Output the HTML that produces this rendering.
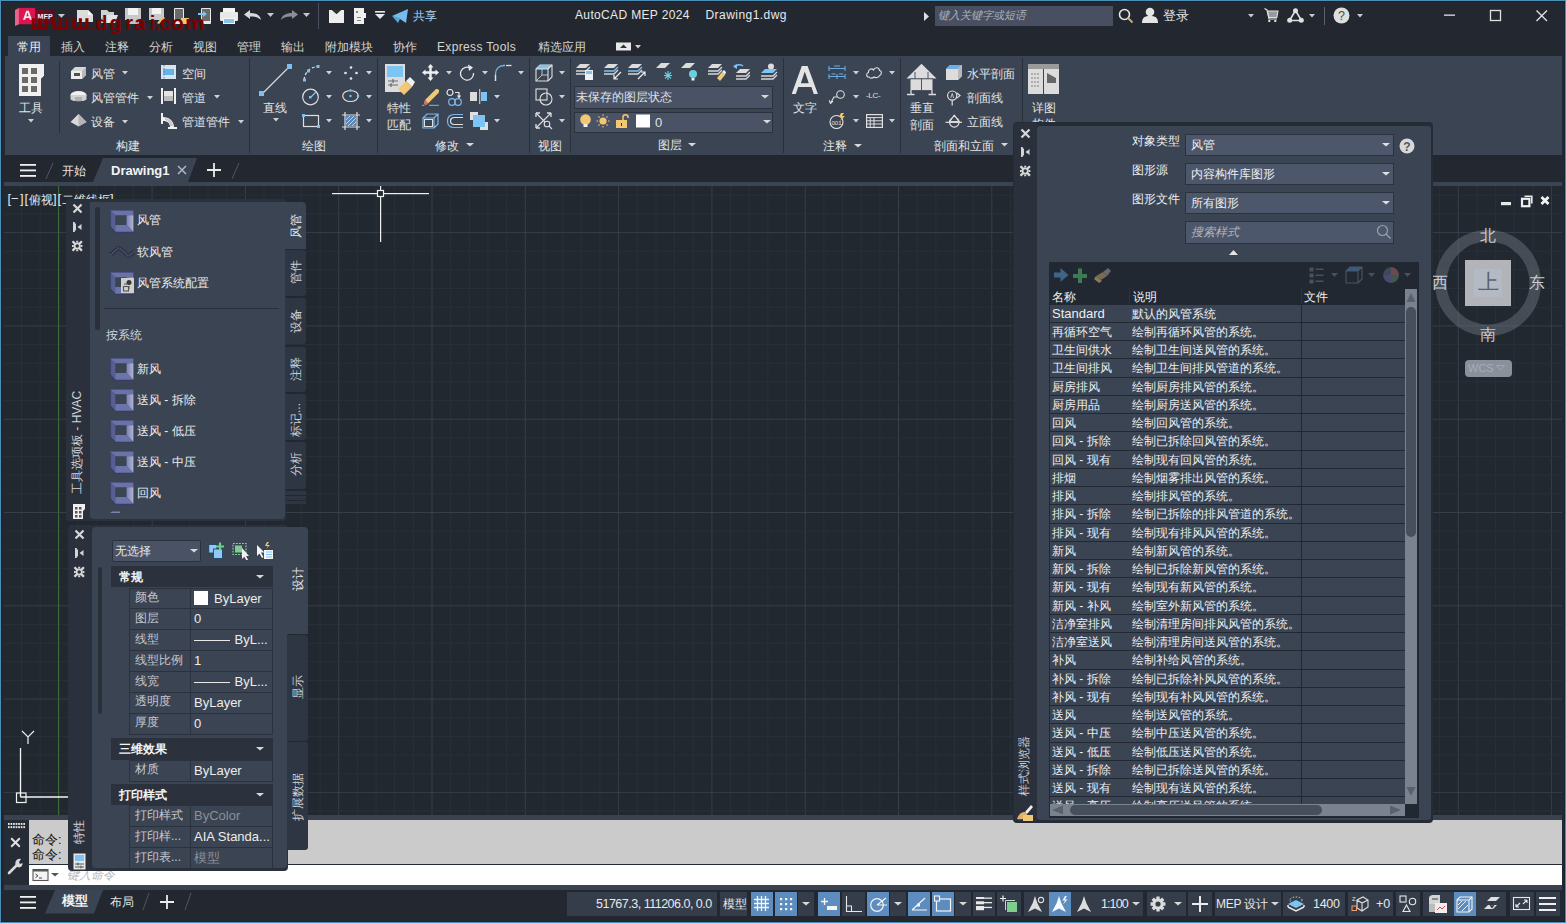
<!DOCTYPE html><html><head><meta charset="utf-8"><style>
html,body{margin:0;padding:0;}
body{width:1566px;height:923px;position:relative;overflow:hidden;background:#232830;font-family:"Liberation Sans",sans-serif;}
.a{position:absolute;}
.t{white-space:nowrap;line-height:1;}
</style></head><body><div class="a" style="left:0px;top:0px;width:1566px;height:923px;background:#4a90b8;"></div>
<div class="a" style="left:1px;top:1px;width:1564px;height:921px;background:#0f2538;"></div>
<div class="a" style="left:2px;top:2px;width:1562px;height:919px;background:#232830;"></div>
<svg class="a" style="left:13px;top:6px;" width="54" height="22" viewBox="0 0 54 22">
<defs><linearGradient id="mepg" x1="0" y1="0" x2="1" y2="0"><stop offset="0" stop-color="#7a0a2a"/><stop offset="1" stop-color="#4a1424"/></linearGradient></defs>
<path d="M2 4 L6 2 V18.2 L2 20 Z" fill="#e8648a"/>
<rect x="5.9" y="1.9" width="16.1" height="16.3" fill="#dc1450"/>
<path d="M10 13.8 L13.2 4.8 H15.8 L19 13.8 H16.8 L16.2 11.9 H12.8 L12.2 13.8 Z M13.3 10.2 H15.7 L14.5 6.6 Z" fill="#fbe4ee"/>
<rect x="22" y="4" width="19.4" height="13.3" fill="url(#mepg)"/>
<text x="24.6" y="12.9" font-family="Liberation Sans" font-weight="bold" font-size="7" fill="#f8eef2">MEP</text>
<path d="M44.8 7.9 H52 L48.4 11.7 Z" fill="#c8c8c8"/>
</svg>
<svg class="a" style="left:76px;top:7px;" width="18" height="17" viewBox="0 0 18 17"><path d="M1 3 H12 L17 8 V15 H1 Z" fill="#dcdcdc"/><path d="M12 3 L17 8 H12 Z" fill="#f8f8f8"/></svg>
<svg class="a" style="left:100px;top:8px;" width="19" height="16" viewBox="0 0 19 16"><path d="M1 2 H7 L9 4 H14 V7 H4 L1 14 Z" fill="#d0d0d0"/><path d="M4 7 H18 L15 15 H1 Z" fill="#e4e4e4"/></svg>
<svg class="a" style="left:124px;top:7px;" width="18" height="18" viewBox="0 0 18 18"><rect x="1" y="1" width="16" height="12" fill="#c8c8c8"/><rect x="4" y="1" width="10" height="7" fill="#f2f2f2"/><rect x="3" y="13" width="12" height="4" fill="#e8e8e8" opacity="0.8"/></svg>
<svg class="a" style="left:148px;top:7px;" width="18" height="18" viewBox="0 0 18 18"><rect x="1" y="1" width="15" height="12" fill="#c8c8c8"/><rect x="4" y="1" width="9" height="6" fill="#f2f2f2"/><path d="M9 16 L15 9 L17 11 L11 17 Z" fill="#f0c070"/></svg>
<svg class="a" style="left:172px;top:7px;" width="20" height="18" viewBox="0 0 20 18"><rect x="2" y="1" width="10" height="16" rx="1" fill="#e8e8e8"/><rect x="3" y="2" width="8" height="12" fill="#6a6a6a"/><rect x="9" y="11" width="8" height="6" fill="#f0c878"/></svg>
<svg class="a" style="left:197px;top:7px;" width="16" height="18" viewBox="0 0 16 18"><rect x="4" y="1" width="10" height="16" rx="1" fill="#e8e8e8"/><rect x="5" y="2" width="8" height="12" fill="#6a6a6a"/><path d="M1 6 H6 V4 L10 7 L6 10 V8 H1 Z" fill="#7cc4f4"/></svg>
<svg class="a" style="left:220px;top:7px;" width="18" height="18" viewBox="0 0 18 18"><rect x="3" y="1" width="12" height="5" fill="#f4f4f4"/><rect x="0" y="5" width="18" height="9" rx="1" fill="#e8e8e8"/><rect x="3" y="11" width="12" height="6" fill="#f4f4f4"/><rect x="4" y="12" width="10" height="4" fill="#8cc4ec"/></svg>
<svg class="a" style="left:244px;top:10px;" width="19" height="11" viewBox="0 0 19 11"><path d="M0 4.5 L6 0 V3 C12 3 16 5 17 10 C14 7 11 6.5 6 6.5 V9 Z" fill="#d8d8d8"/></svg>
<svg class="a" style="left:267px;top:13px;" width="7" height="5" viewBox="0 0 7 5"><path d="M0 0 H7 L3.5 4 Z" fill="#c8c8c8"/></svg>
<svg class="a" style="left:280px;top:10px;" width="19" height="11" viewBox="0 0 19 11"><path d="M18 4.5 L12 0 V3 C6 3 2 5 1 10 C4 7 7 6.5 12 6.5 V9 Z" fill="#8a8e94"/></svg>
<svg class="a" style="left:303px;top:13px;" width="7" height="5" viewBox="0 0 7 5"><path d="M0 0 H7 L3.5 4 Z" fill="#c8c8c8"/></svg>
<div class="a" style="left:318px;top:3px;width:1px;height:26px;background:#4a5060;"></div>
<svg class="a" style="left:329px;top:9px;" width="15" height="14" viewBox="0 0 15 14"><path d="M0 1 H3 L7.5 5 L12 1 H15 V14 H0 Z" fill="#eeeeee"/><path d="M3 1 L7.5 5 L12 1 Z" fill="#333"/></svg>
<svg class="a" style="left:354px;top:8px;" width="12" height="16" viewBox="0 0 12 16"><rect x="0" y="0" width="10" height="16" fill="#f0f0f0"/><rect x="9" y="5" width="3" height="5" fill="#f0f0f0"/><rect x="2" y="3" width="2" height="2" fill="#888"/><rect x="3" y="9" width="4" height="1" fill="#888"/><rect x="3" y="12" width="4" height="1" fill="#888"/></svg>
<svg class="a" style="left:375px;top:11px;" width="10" height="9" viewBox="0 0 10 9"><rect x="0" y="0" width="10" height="1.6" fill="#e8e8e8"/><path d="M0 3 H10 L5 8 Z" fill="#e8e8e8"/></svg>
<svg class="a" style="left:392px;top:9px;" width="17" height="14" viewBox="0 0 17 14"><path d="M0 7 L16 0 L14 14 L8 10 Z" fill="#74bcec"/><path d="M0 7 L8 10 L6 14 Z" fill="#5aa8dc"/></svg>
<div class="a t " style="left:413px;top:10px;font-size:12px;color:#a8d4f4;">共享</div>
<svg class="a" style="left:0px;top:0px;" width="220" height="40" viewBox="0 0 220 40"><path d="M33.3 18.2 V26.3 Q33.3 28.4 35.4 28.4 H44.2 Q46.3 28.4 46.3 26.3 V18.2 M39.8 18.2 V28.4" fill="none" stroke="#7d0000" stroke-width="3.1" stroke-linejoin="round"/><path d="M53.7 18.2 V26.3 Q53.7 28.4 55.8 28.4 H64.6 Q66.7 28.4 66.7 26.3 V18.2 M60.2 18.2 V28.4" fill="none" stroke="#7d0000" stroke-width="3.1" stroke-linejoin="round"/><path d="M73.9 18.2 V26.3 Q73.9 28.4 76.0 28.4 H84.8 Q86.9 28.4 86.9 26.3 V18.2 M80.4 18.2 V28.4" fill="none" stroke="#7d0000" stroke-width="3.1" stroke-linejoin="round"/><rect x="91.2" y="26.8" width="3.2" height="3.1" fill="#7d0000"/><text x="95.3" y="29.8" font-family="Liberation Sans" font-weight="bold" font-size="20" fill="#7d0000">d</text><text x="109.5" y="29.8" font-family="Liberation Sans" font-weight="bold" font-size="20" fill="#7d0000">g</text><text x="125.3" y="29.8" font-family="Liberation Sans" font-weight="bold" font-size="20" fill="#7d0000">r</text><text x="134.5" y="29.8" font-family="Liberation Sans" font-weight="bold" font-size="20" fill="#7d0000">a</text><text x="149.8" y="29.8" font-family="Liberation Sans" font-weight="bold" font-size="20" fill="#7d0000">i</text><text x="154.8" y="29.8" font-family="Liberation Sans" font-weight="bold" font-size="20" fill="#7d0000">.</text><text x="159.8" y="29.8" font-family="Liberation Sans" font-weight="bold" font-size="20" fill="#7d0000">c</text><text x="171.6" y="29.8" font-family="Liberation Sans" font-weight="bold" font-size="20" fill="#7d0000">o</text><text x="185.0" y="29.8" font-family="Liberation Sans" font-weight="bold" font-size="20" fill="#7d0000" transform="translate(185 0) scale(1.12 1) translate(-185 0)">m</text></svg>
<div class="a t " style="left:575px;top:9.3px;font-size:12px;color:#e8e8e8;letter-spacing:0.35px;">AutoCAD MEP 2024</div>
<div class="a t " style="left:705.5px;top:9.3px;font-size:12px;color:#e8e8e8;letter-spacing:0.45px;">Drawing1.dwg</div>
<svg class="a" style="left:924px;top:12px;" width="6" height="9" viewBox="0 0 6 9"><path d="M0 0 L5 4.5 L0 9 Z" fill="#e0e0e0"/></svg>
<div class="a" style="left:935px;top:6px;width:178px;height:20px;background:#484f60;"></div>
<div class="a t " style="left:938px;top:10px;font-size:11px;color:#aeb2ba;font-style:italic;"><i>键入关键字或短语</i></div>
<svg class="a" style="left:1118px;top:8px;" width="16" height="16" viewBox="0 0 16 16"><circle cx="6.5" cy="6.5" r="5" fill="none" stroke="#e8e8e8" stroke-width="1.6"/><path d="M10 10 L14.5 14.5" stroke="#d0a878" stroke-width="2"/></svg>
<svg class="a" style="left:1141px;top:7px;" width="18" height="16" viewBox="0 0 18 16"><circle cx="9" cy="5" r="4.3" fill="#e4e4e4"/><path d="M1 16 C1 10 4 9 9 9 C14 9 17 10 17 16 Z" fill="#e4e4e4"/></svg>
<div class="a t " style="left:1163px;top:9px;font-size:13px;color:#e8e8e8;">登录</div>
<svg class="a" style="left:1248px;top:14px;" width="6" height="4" viewBox="0 0 6 4"><path d="M0 0 H6 L3 3.5 Z" fill="#c8c8c8"/></svg>
<svg class="a" style="left:1264px;top:8px;" width="16" height="14" viewBox="0 0 16 14"><path d="M0.5 0.5 L3 2 L5 11 H13" fill="none" stroke="#e0e0e0" stroke-width="1.2"/><path d="M3.6 3 H14 L12.8 9.5 H4.8 Z" fill="#9a9a9a" stroke="#e0e0e0" stroke-width="1.1"/><rect x="4.3" y="12" width="2" height="2" fill="#e0e0e0"/><rect x="10.3" y="12" width="2" height="2" fill="#e0e0e0"/></svg>
<svg class="a" style="left:1287px;top:8px;" width="17" height="15" viewBox="0 0 17 15"><path d="M8.5 2.5 L2.5 12.5 M8.5 2.5 L14.5 12.5 M2.5 12.5 H14.5" fill="none" stroke="#e0e0e0" stroke-width="1.6"/><circle cx="8.5" cy="2.8" r="2.5" fill="#e0e0e0"/><circle cx="2.7" cy="12.3" r="2.5" fill="#e0e0e0"/><circle cx="14.3" cy="12.3" r="2.5" fill="#e0e0e0"/></svg>
<svg class="a" style="left:1309px;top:14px;" width="6" height="4" viewBox="0 0 6 4"><path d="M0 0 H6 L3 3.5 Z" fill="#c8c8c8"/></svg>
<div class="a" style="left:1324px;top:7px;width:1px;height:18px;background:#5a6070;"></div>
<svg class="a" style="left:1333px;top:7px;" width="17" height="17" viewBox="0 0 17 17"><circle cx="8.5" cy="8.5" r="8" fill="#dedede"/><text x="8.5" y="13" text-anchor="middle" font-family="Liberation Sans" font-size="12.5" fill="#4a4a4a">?</text></svg>
<svg class="a" style="left:1357px;top:14px;" width="6" height="4" viewBox="0 0 6 4"><path d="M0 0 H6 L3 3.5 Z" fill="#c8c8c8"/></svg>
<svg class="a" style="left:1444px;top:14px;" width="12" height="3" viewBox="0 0 12 3"><rect x="0" y="0.5" width="11" height="1.3" fill="#e0e0e0"/></svg>
<svg class="a" style="left:1489px;top:9px;" width="14" height="14" viewBox="0 0 14 14"><rect x="1.5" y="1.5" width="10" height="10" fill="none" stroke="#e0e0e0" stroke-width="1.3"/></svg>
<svg class="a" style="left:1535px;top:9px;" width="14" height="14" viewBox="0 0 14 14"><path d="M1.5 1.5 L12 12 M12 1.5 L1.5 12" stroke="#e0e0e0" stroke-width="1.4"/></svg>
<div class="a" style="left:8px;top:36px;width:42px;height:20px;background:#3b4453;"></div>
<div class="a t " style="left:17px;top:40.98px;font-size:12px;color:#f0f0f0;">常用</div>
<div class="a t " style="left:61px;top:40.98px;font-size:12px;color:#d4d4d4;">插入</div>
<div class="a t " style="left:105px;top:40.98px;font-size:12px;color:#d4d4d4;">注释</div>
<div class="a t " style="left:149px;top:40.98px;font-size:12px;color:#d4d4d4;">分析</div>
<div class="a t " style="left:193px;top:40.98px;font-size:12px;color:#d4d4d4;">视图</div>
<div class="a t " style="left:237px;top:40.98px;font-size:12px;color:#d4d4d4;">管理</div>
<div class="a t " style="left:281px;top:40.98px;font-size:12px;color:#d4d4d4;">输出</div>
<div class="a t " style="left:325px;top:40.98px;font-size:12px;color:#d4d4d4;">附加模块</div>
<div class="a t " style="left:393px;top:40.98px;font-size:12px;color:#d4d4d4;">协作</div>
<div class="a t " style="left:437px;top:41px;font-size:12px;color:#d4d4d4;letter-spacing:0.35px;">Express Tools</div>
<div class="a t " style="left:538px;top:40.98px;font-size:12px;color:#d4d4d4;">精选应用</div>
<svg class="a" style="left:616px;top:42px;" width="26" height="9" viewBox="0 0 26 9"><rect x="0" y="0.5" width="15" height="8" fill="#e8e8e8"/><path d="M4 6 L7.5 2.5 L11 6 Z" fill="#333"/><path d="M19 3 H25 L22 6.5 Z" fill="#d0d0d0"/></svg>
<div class="a" style="left:5px;top:56px;width:1557px;height:99px;background:#3b4453;"></div>
<div class="a" style="left:249px;top:58px;width:1px;height:95px;background:#2a303b;"></div>
<div class="a" style="left:377px;top:58px;width:1px;height:95px;background:#2a303b;"></div>
<div class="a" style="left:529px;top:58px;width:1px;height:95px;background:#2a303b;"></div>
<div class="a" style="left:570px;top:58px;width:1px;height:95px;background:#2a303b;"></div>
<div class="a" style="left:783px;top:58px;width:1px;height:95px;background:#2a303b;"></div>
<div class="a" style="left:900px;top:58px;width:1px;height:95px;background:#2a303b;"></div>
<div class="a" style="left:1022px;top:58px;width:1px;height:95px;background:#2a303b;"></div>
<div class="a" style="left:59px;top:61px;width:1px;height:72px;background:#2a303b;"></div>
<svg class="a" style="left:18px;top:63px;" width="27" height="34" viewBox="0 0 27 34"><path d="M1 1 H26 V13 L23 16 V33 H1 Z" fill="#f0f0f0"/><path d="M23 16 L26 13 V20 L23 23 Z" fill="#3b4453"/><rect x="4" y="5" width="6" height="6" fill="#6a6a6a"/><rect x="13" y="5" width="6" height="6" fill="#6a6a6a"/><rect x="4" y="14" width="6" height="6" fill="#6a6a6a"/><rect x="13" y="14" width="6" height="6" fill="#6a6a6a"/><rect x="4" y="23" width="6" height="6" fill="#6a6a6a"/><rect x="13" y="23" width="6" height="6" fill="#6a6a6a"/></svg>
<div class="a t " style="left:19px;top:101.98px;font-size:12px;color:#e4e4e4;">工具</div>
<svg class="a" style="left:28px;top:118.5px;" width="6" height="4" viewBox="0 0 6 4"><path d="M0 0 H6 L3.0 3.6 Z" fill="#d0d0d0"/></svg>
<svg class="a" style="left:70px;top:66px;" width="17" height="14" viewBox="0 0 17 14"><path d="M1 5 L5 1 H16 V9 L12 13 H1 Z" fill="#d8d8d8"/><path d="M1 5 H12 V13 H1 Z" fill="#ececec"/><path d="M12 5 L16 1 V9 L12 13 Z" fill="#b8b8b8"/><rect x="4" y="7" width="6" height="3" fill="#505050"/></svg>
<div class="a t " style="left:91px;top:67.88px;font-size:12px;color:#e4e4e4;">风管</div>
<svg class="a" style="left:122px;top:71.4px;" width="6" height="4" viewBox="0 0 6 4"><path d="M0 0 H6 L3.0 3.6 Z" fill="#d0d0d0"/></svg>
<svg class="a" style="left:70px;top:90px;" width="17" height="14" viewBox="0 0 17 14"><ellipse cx="8.5" cy="5" rx="8" ry="4" fill="#f0f0f0"/><path d="M0.5 5 V9 C0.5 12 16.5 12 16.5 9 V5 Z" fill="#d0d0d0"/><rect x="5" y="7" width="7" height="4" fill="#b0b0b0"/></svg>
<div class="a t " style="left:91px;top:92.28px;font-size:12px;color:#e4e4e4;">风管管件</div>
<svg class="a" style="left:147px;top:95.8px;" width="6" height="4" viewBox="0 0 6 4"><path d="M0 0 H6 L3.0 3.6 Z" fill="#d0d0d0"/></svg>
<svg class="a" style="left:70px;top:114px;" width="17" height="13" viewBox="0 0 17 13"><path d="M8.5 0 L16.5 8 L8.5 12.5 L0.5 8 Z" fill="#d8d8d8"/><path d="M8.5 0 L16.5 8 L8.5 12.5 Z" fill="#b4b4b4"/></svg>
<div class="a t " style="left:91px;top:116.28px;font-size:12px;color:#e4e4e4;">设备</div>
<svg class="a" style="left:122px;top:119.8px;" width="6" height="4" viewBox="0 0 6 4"><path d="M0 0 H6 L3.0 3.6 Z" fill="#d0d0d0"/></svg>
<svg class="a" style="left:161px;top:65px;" width="15" height="15" viewBox="0 0 15 15"><rect x="0" y="0" width="15" height="14" fill="#d8e4f0"/><rect x="2" y="4" width="11" height="6" fill="#64b4ec"/><path d="M3 0 V14" stroke="#4a8cc8" stroke-dasharray="1.5 1.5"/></svg>
<div class="a t " style="left:182px;top:67.68px;font-size:12px;color:#e4e4e4;">空间</div>
<svg class="a" style="left:161px;top:88px;" width="16" height="17" viewBox="0 0 16 17"><rect x="0" y="0" width="2" height="16" fill="#f0f0f0"/><rect x="13" y="0" width="2" height="16" fill="#f0f0f0"/><rect x="3" y="3" width="9" height="10" fill="#e4e4e4"/><rect x="3" y="8" width="9" height="5" fill="#bcbcbc"/></svg>
<div class="a t " style="left:182px;top:91.88px;font-size:12px;color:#e4e4e4;">管道</div>
<svg class="a" style="left:214px;top:95.4px;" width="6" height="4" viewBox="0 0 6 4"><path d="M0 0 H6 L3.0 3.6 Z" fill="#d0d0d0"/></svg>
<svg class="a" style="left:160px;top:112px;" width="18" height="18" viewBox="0 0 18 18"><path d="M1 1 H3 V5 C9 5 14 9 14 15 H17 V17 H8 V15 H10 C10 11 7 9 3 9 V12 H1 Z" fill="#f0f0f0"/><path d="M5 6 C9 6 13 10 13 14 H10 C10 11 8 8 5 8 Z" fill="#c8c8c8"/></svg>
<div class="a t " style="left:182px;top:115.98px;font-size:12px;color:#e4e4e4;">管道管件</div>
<svg class="a" style="left:238px;top:119.5px;" width="6" height="4" viewBox="0 0 6 4"><path d="M0 0 H6 L3.0 3.6 Z" fill="#d0d0d0"/></svg>
<div class="a t " style="left:116px;top:139.98px;font-size:12px;color:#e4e4e4;">构建</div>
<svg class="a" style="left:258px;top:63px;" width="34" height="34" viewBox="0 0 34 34"><path d="M4 31 L31 4" stroke="#e0e0e0" stroke-width="1.1"/><rect x="1" y="28" width="5" height="5" fill="#7cc0f0"/><rect x="29" y="1" width="5" height="5" fill="#7cc0f0"/></svg>
<div class="a t " style="left:263px;top:102.18px;font-size:12px;color:#e4e4e4;">直线</div>
<svg class="a" style="left:273px;top:118.4px;" width="6" height="4" viewBox="0 0 6 4"><path d="M0 0 H6 L3.0 3.6 Z" fill="#d0d0d0"/></svg>
<svg class="a" style="left:302px;top:65px;" width="18" height="17" viewBox="0 0 18 17"><path d="M2 15 C3 7 8 2 16 1.5" fill="none" stroke="#e0e0e0" stroke-width="1.2" stroke-dasharray="3 2"/><rect x="1" y="13.5" width="3" height="3" fill="#7cc0f0"/><rect x="5" y="4.5" width="3" height="3" fill="#7cc0f0"/><rect x="14.5" y="0" width="3" height="3" fill="#7cc0f0"/></svg>
<svg class="a" style="left:326px;top:71px;" width="6" height="4" viewBox="0 0 6 4"><path d="M0 0 H6 L3.0 3.6 Z" fill="#d0d0d0"/></svg>
<svg class="a" style="left:344px;top:66px;" width="14" height="14" viewBox="0 0 14 14"><circle cx="7" cy="1.5" r="1.3" fill="#e8e8e8"/><circle cx="1.5" cy="7" r="1.3" fill="#e8e8e8"/><circle cx="12.5" cy="7" r="1.3" fill="#e8e8e8"/><circle cx="7" cy="12.5" r="1.3" fill="#e8e8e8"/></svg>
<svg class="a" style="left:366px;top:71px;" width="6" height="4" viewBox="0 0 6 4"><path d="M0 0 H6 L3.0 3.6 Z" fill="#d0d0d0"/></svg>
<svg class="a" style="left:302px;top:88px;" width="18" height="18" viewBox="0 0 18 18"><circle cx="8.5" cy="9" r="7.8" fill="none" stroke="#e0e0e0" stroke-width="1.2"/><path d="M9 9 L14 4" stroke="#7cc0f0" stroke-width="1.2"/><rect x="7" y="8" width="2.5" height="2.5" fill="#7cc0f0"/></svg>
<svg class="a" style="left:326px;top:95px;" width="6" height="4" viewBox="0 0 6 4"><path d="M0 0 H6 L3.0 3.6 Z" fill="#d0d0d0"/></svg>
<svg class="a" style="left:342px;top:89px;" width="18" height="14" viewBox="0 0 18 14"><ellipse cx="8.5" cy="7" rx="7.8" ry="5.5" fill="none" stroke="#e0e0e0" stroke-width="1.2"/><circle cx="8.5" cy="1.5" r="1.3" fill="#7cc0f0"/><circle cx="8.5" cy="7" r="1.2" fill="#7cc0f0"/><circle cx="16" cy="7" r="1.3" fill="#7cc0f0"/></svg>
<svg class="a" style="left:366px;top:95px;" width="6" height="4" viewBox="0 0 6 4"><path d="M0 0 H6 L3.0 3.6 Z" fill="#d0d0d0"/></svg>
<svg class="a" style="left:302px;top:114px;" width="18" height="14" viewBox="0 0 18 14"><rect x="1.5" y="1.5" width="15" height="11" fill="none" stroke="#e0e0e0" stroke-width="1.2"/><rect x="0" y="0" width="3" height="3" fill="#7cc0f0"/><rect x="15" y="11" width="3" height="3" fill="#7cc0f0"/></svg>
<svg class="a" style="left:326px;top:119px;" width="6" height="4" viewBox="0 0 6 4"><path d="M0 0 H6 L3.0 3.6 Z" fill="#d0d0d0"/></svg>
<svg class="a" style="left:342px;top:112px;" width="18" height="18" viewBox="0 0 18 18"><path d="M3 0 V18 M15 0 V18 M0 3 H18 M0 15 H18" stroke="#e0e0e0" stroke-width="1.2"/><rect x="4" y="4" width="10" height="10" fill="#5a86b8"/><path d="M4 12 L12 4 M6 14 L14 6 M4 8 L8 4 M10 14 L14 10" stroke="#b8d4f0" stroke-width="1"/></svg>
<svg class="a" style="left:366px;top:119px;" width="6" height="4" viewBox="0 0 6 4"><path d="M0 0 H6 L3.0 3.6 Z" fill="#d0d0d0"/></svg>
<div class="a t " style="left:302px;top:139.58px;font-size:12px;color:#e4e4e4;">绘图</div>
<svg class="a" style="left:384px;top:63px;" width="32" height="34" viewBox="0 0 32 34"><rect x="1" y="1" width="20" height="28" fill="#dcdcdc"/><rect x="3" y="3" width="16" height="11" fill="#7cc4f4"/><path d="M4 18 H14 M9 16 V20 M4 22 H14 M7 20 V24" stroke="#6a6a6a" stroke-width="1.2"/><path d="M14 26 L22 18 L28 24 L20 32 Z" fill="#f0c878"/><path d="M22 18 L26 14 L31 19 L28 24 Z" fill="#f0f0f0"/></svg>
<div class="a t " style="left:387px;top:102.48px;font-size:12px;color:#e4e4e4;">特性</div>
<div class="a t " style="left:387px;top:119.18px;font-size:12px;color:#e4e4e4;">匹配</div>
<svg class="a" style="left:422px;top:64px;" width="17" height="17" viewBox="0 0 17 17"><path d="M8.5 0 L11.5 3.5 H9.7 V7.3 H13.5 V5.5 L17 8.5 L13.5 11.5 V9.7 H9.7 V13.5 H11.5 L8.5 17 L5.5 13.5 H7.3 V9.7 H3.5 V11.5 L0 8.5 L3.5 5.5 V7.3 H7.3 V3.5 H5.5 Z" fill="#f0f0f0"/></svg>
<svg class="a" style="left:446px;top:71px;" width="6" height="4" viewBox="0 0 6 4"><path d="M0 0 H6 L3.0 3.6 Z" fill="#d0d0d0"/></svg>
<svg class="a" style="left:459px;top:64px;" width="16" height="17" viewBox="0 0 16 17"><path d="M12 4.5 A6.5 6.5 0 1 0 14.5 9" fill="none" stroke="#e8e8e8" stroke-width="1.3"/><path d="M9 0.5 L14 3.5 L10 7 Z" fill="#e8e8e8"/></svg>
<svg class="a" style="left:482px;top:71px;" width="6" height="4" viewBox="0 0 6 4"><path d="M0 0 H6 L3.0 3.6 Z" fill="#d0d0d0"/></svg>
<svg class="a" style="left:494px;top:64px;" width="18" height="17" viewBox="0 0 18 17"><path d="M1.5 17 V10 C1.5 5 5 1.5 10 1.5 H11" fill="none" stroke="#7cb8e8" stroke-width="1.3"/><path d="M12 1.5 H17.5" stroke="#e0e0e0" stroke-width="1.3"/><path d="M1.5 11 V17" stroke="#e0e0e0" stroke-width="1.3"/></svg>
<svg class="a" style="left:518px;top:71px;" width="6" height="4" viewBox="0 0 6 4"><path d="M0 0 H6 L3.0 3.6 Z" fill="#d0d0d0"/></svg>
<svg class="a" style="left:422px;top:88px;" width="18" height="18" viewBox="0 0 18 18"><path d="M3 12 L13.5 1.5 C14.5 0.5 17.5 1 17 3.5 L16.5 5 L6 15.5 Z" fill="#f0c878"/><path d="M3 12 L6 15.5 L4.5 17 C3 17.5 1.5 16 2 14 Z" fill="#e06a70"/><path d="M0 17.3 H2.5 M7 17.3 H17" stroke="#7cb8e8" stroke-width="1"/></svg>
<svg class="a" style="left:446px;top:89px;" width="18" height="17" viewBox="0 0 18 17"><circle cx="4" cy="3.5" r="3" fill="none" stroke="#e8e8e8" stroke-width="1.2"/><path d="M9 3.5 H13 V8 M11.5 6.5 L13 8.5 L14.5 6.5" fill="none" stroke="#e8e8e8" stroke-width="1.2"/><circle cx="6" cy="13" r="3.3" fill="none" stroke="#7cb8e8" stroke-width="1.2"/><circle cx="12" cy="13" r="3.3" fill="none" stroke="#7cb8e8" stroke-width="1.2"/></svg>
<svg class="a" style="left:470px;top:89px;" width="18" height="15" viewBox="0 0 18 15"><rect x="0" y="3" width="7" height="9" fill="#dcdcdc"/><rect x="9" y="0" width="1.3" height="15" fill="#b8b8b8"/><rect x="11" y="3" width="6" height="9" fill="#7cc4f4"/></svg>
<svg class="a" style="left:494px;top:95px;" width="6" height="4" viewBox="0 0 6 4"><path d="M0 0 H6 L3.0 3.6 Z" fill="#d0d0d0"/></svg>
<svg class="a" style="left:422px;top:113px;" width="18" height="16" viewBox="0 0 18 16"><path d="M1 5 H12 V15 H1 Z M1 5 L5 1 H16 V11 L12 15 M12 5 L16 1" fill="none" stroke="#7cb8e8" stroke-width="1.2"/><rect x="2.5" y="6.5" width="8" height="7" fill="none" stroke="#e0e0e0" stroke-width="1"/></svg>
<svg class="a" style="left:446px;top:113px;" width="18" height="16" viewBox="0 0 18 16"><path d="M17 1.5 H8 C4 1.5 1.5 4 1.5 8 C1.5 12 4 14.5 8 14.5 H17" fill="none" stroke="#7cb8e8" stroke-width="1.2"/><path d="M17 4.5 H8.5 C6 4.5 4.5 6 4.5 8 C4.5 10 6 11.5 8.5 11.5 H17" fill="none" stroke="#e0e0e0" stroke-width="1.2"/></svg>
<svg class="a" style="left:470px;top:112px;" width="18" height="18" viewBox="0 0 18 18"><rect x="0" y="0" width="8" height="8" fill="#e0e0e0"/><rect x="10" y="10" width="8" height="8" fill="#e0e0e0"/><rect x="3" y="3" width="12" height="12" fill="#7cc4f4"/></svg>
<svg class="a" style="left:494px;top:119px;" width="6" height="4" viewBox="0 0 6 4"><path d="M0 0 H6 L3.0 3.6 Z" fill="#d0d0d0"/></svg>
<div class="a t " style="left:435px;top:139.58px;font-size:12px;color:#e4e4e4;">修改</div>
<svg class="a" style="left:465.5px;top:143.3px;" width="8" height="4" viewBox="0 0 8 4"><path d="M0 0 H8 L4.0 3.6 Z" fill="#d8d8d8"/></svg>
<svg class="a" style="left:535px;top:64px;" width="18" height="18" viewBox="0 0 18 18"><path d="M1 5 L5 1 H17 V13 L13 17 H1 Z" fill="none" stroke="#e0e0e0" stroke-width="1.1"/><path d="M1 5 L5 1 H17 L13 5 Z" fill="#7cc4f4"/><path d="M1 5 H13 V17 M13 5 L17 1" stroke="#e0e0e0" stroke-width="1.1" fill="none"/><path d="M1 17 L7 11 H13 M7 11 V5" stroke="#e0e0e0" stroke-width="0.8" fill="none"/></svg>
<svg class="a" style="left:559px;top:71px;" width="6" height="4" viewBox="0 0 6 4"><path d="M0 0 H6 L3.0 3.6 Z" fill="#d0d0d0"/></svg>
<svg class="a" style="left:535px;top:88px;" width="18" height="18" viewBox="0 0 18 18"><rect x="1" y="1" width="11" height="11" fill="none" stroke="#e0e0e0" stroke-width="1.1"/><circle cx="11" cy="11" r="6" fill="none" stroke="#e0e0e0" stroke-width="1.1"/></svg>
<svg class="a" style="left:559px;top:95px;" width="6" height="4" viewBox="0 0 6 4"><path d="M0 0 H6 L3.0 3.6 Z" fill="#d0d0d0"/></svg>
<svg class="a" style="left:535px;top:112px;" width="18" height="18" viewBox="0 0 18 18"><path d="M1 1 L11 11 M16 1 L1 16" stroke="#e0e0e0" stroke-width="1.1"/><path d="M1 1 H5 M1 1 V5 M16 1 H12 M16 1 V5 M1 16 H5 M1 16 V12" stroke="#e0e0e0" stroke-width="1.3"/><circle cx="12" cy="12" r="2.8" fill="#3b4453" stroke="#e0e0e0" stroke-width="1.1"/><path d="M14 14 L17 17" stroke="#e0e0e0" stroke-width="1.1"/></svg>
<svg class="a" style="left:559px;top:119px;" width="6" height="4" viewBox="0 0 6 4"><path d="M0 0 H6 L3.0 3.6 Z" fill="#d0d0d0"/></svg>
<div class="a t " style="left:538px;top:139.58px;font-size:12px;color:#e4e4e4;">视图</div>
<svg class="a" style="left:576px;top:63px;" width="18" height="18" viewBox="0 0 18 18"><path d="M0 5 L4 1 H14 L10 5 Z" fill="#dcdcdc"/><path d="M0 8 H10 L14 4" fill="none" stroke="#d8d8d8" stroke-width="1.3"/><path d="M0 11 H10 L14 7" fill="none" stroke="#d8d8d8" stroke-width="1.3"/><rect x="9" y="7" width="8" height="10" fill="#f0f0f0"/><rect x="10" y="8" width="6" height="3" fill="#7cc4f4"/></svg>
<svg class="a" style="left:604px;top:63px;" width="18" height="18" viewBox="0 0 18 18"><path d="M0 5 L4 1 H14 L10 5 Z" fill="#dcdcdc"/><path d="M0 8 H10 L14 4" fill="none" stroke="#7cc4f4" stroke-width="1.3"/><path d="M0 11 H10 L14 7" fill="none" stroke="#d8d8d8" stroke-width="1.3"/><path d="M17 9 L10 16 M10 12 V16 H14" stroke="#f0f0f0" stroke-width="1.2" fill="none"/></svg>
<svg class="a" style="left:628px;top:63px;" width="18" height="18" viewBox="0 0 18 18"><path d="M0 5 L4 1 H14 L10 5 Z" fill="#dcdcdc"/><path d="M0 8 H10 L14 4" fill="none" stroke="#7cc4f4" stroke-width="1.3"/><path d="M0 11 H10 L14 7" fill="none" stroke="#d8d8d8" stroke-width="1.3"/><path d="M10 16 L17 9 M13 9 H17 V13" stroke="#f0f0f0" stroke-width="1.2" fill="none"/></svg>
<svg class="a" style="left:656px;top:63px;" width="18" height="18" viewBox="0 0 18 18"><path d="M0 5 L5 0 H14 L9 5 Z" fill="#dcdcdc"/><g stroke="#6ad0e0" stroke-width="1.1"><path d="M12 8 V17 M8 12.5 H16 M9 9.5 L15 15.5 M15 9.5 L9 15.5"/></g></svg>
<svg class="a" style="left:681px;top:63px;" width="17" height="18" viewBox="0 0 17 18"><path d="M0 5 L5 0 H14 L9 5 Z" fill="#dcdcdc"/><circle cx="12" cy="11" r="4" fill="#6ad0e0"/><rect x="10.5" y="15" width="3" height="2.5" fill="#f0f0f0"/></svg>
<svg class="a" style="left:708px;top:63px;" width="18" height="18" viewBox="0 0 18 18"><path d="M0 5 L4 1 H14 L10 5 Z" fill="#dcdcdc"/><path d="M0 8 H10 L14 4" fill="none" stroke="#d8d8d8" stroke-width="1.3"/><path d="M0 11 H10 L14 7" fill="none" stroke="#d8d8d8" stroke-width="1.3"/><path d="M9 15 L14 9 L17 12 L12 18 Z" fill="#f0c878"/><path d="M14 9 L16 7 L18 9 L17 12 Z" fill="#f0f0f0"/></svg>
<svg class="a" style="left:733px;top:63px;" width="17" height="18" viewBox="0 0 17 18"><path d="M2 5 C3 1 8 1 10 3" fill="none" stroke="#7cc4f4" stroke-width="1.5"/><path d="M0 3 L4 1 L4 6 Z" fill="#7cc4f4"/><path d="M3 10 L7 6 H17 L13 10 Z" fill="#dcdcdc"/><path d="M3 13 H13 L17 9 M3 16 H13 L17 12" fill="none" stroke="#d8d8d8" stroke-width="1.3"/></svg>
<svg class="a" style="left:760px;top:63px;" width="18" height="18" viewBox="0 0 18 18"><circle cx="11" cy="3.5" r="3" fill="#dcdcdc"/><path d="M1 10 L5 6 H17 L13 10 Z" fill="#7cc4f4"/><path d="M1 13 H13 L17 9 M1 16 H13 L17 12" fill="none" stroke="#d8d8d8" stroke-width="1.3"/></svg>
<div class="a" style="left:573.5px;top:85.5px;width:199px;height:23px;background:#4a5366;border:1px solid #2c323d;box-sizing:border-box;"></div>
<div class="a t " style="left:576px;top:91.48px;font-size:12px;color:#e0e0e0;">未保存的图层状态</div>
<svg class="a" style="left:761px;top:95px;" width="8" height="4" viewBox="0 0 8 4"><path d="M0 0 H8 L4.0 3.6 Z" fill="#d8d8d8"/></svg>
<div class="a" style="left:573.5px;top:111.5px;width:199px;height:21px;background:#4a5366;border:1px solid #2c323d;box-sizing:border-box;"></div>
<svg class="a" style="left:578px;top:113px;" width="90" height="18" viewBox="0 0 90 18"><circle cx="7.5" cy="6.5" r="5.3" fill="#f4c870"/><rect x="5.5" y="11" width="4" height="3" fill="#f0f0f0"/><circle cx="25" cy="8" r="3.6" fill="#f4c870"/><g stroke="#f4c870" stroke-width="1.1"><path d="M25 1.5 V3 M25 13 V14.5 M18.5 8 H20 M30 8 H31.5 M20.5 3.5 L21.5 4.5 M28.5 11.5 L29.5 12.5 M20.5 12.5 L21.5 11.5 M28.5 4.5 L29.5 3.5"/></g><rect x="38" y="7" width="11" height="8" fill="#f4c870"/><path d="M45 7 V4 C45 1 50 1 50 4 V5" fill="none" stroke="#f4c870" stroke-width="1.5"/><rect x="43" y="10" width="1" height="3" fill="#333"/><rect x="58" y="1.5" width="14" height="13" fill="#ffffff"/></svg>
<div class="a t " style="left:655px;top:116.02px;font-size:13px;color:#e0e0e0;">0</div>
<svg class="a" style="left:763px;top:120px;" width="8" height="4" viewBox="0 0 8 4"><path d="M0 0 H8 L4.0 3.6 Z" fill="#d8d8d8"/></svg>
<div class="a t " style="left:658px;top:139.28px;font-size:12px;color:#e4e4e4;">图层</div>
<svg class="a" style="left:688px;top:142.8px;" width="8" height="4" viewBox="0 0 8 4"><path d="M0 0 H8 L4.0 3.6 Z" fill="#d8d8d8"/></svg>
<svg class="a" style="left:791px;top:65px;" width="28" height="30" viewBox="0 0 28 30"><path d="M0.7 28.9 L10.8 0.9 H16.6 L26.9 28.9 H22.8 L20.4 22 H7.2 L4.8 28.9 Z M9.8 18.2 H17.8 L13.8 6.5 Z" fill="#e4e4e4" fill-rule="evenodd"/></svg>
<div class="a t " style="left:793px;top:102.48px;font-size:12px;color:#e4e4e4;">文字</div>
<svg class="a" style="left:828px;top:65px;" width="18" height="16" viewBox="0 0 18 16"><path d="M1 3.5 H17 M1 11.5 H17" stroke="#6aaee0" stroke-width="1.1"/><path d="M1 1 V6 M17 1 V6 M1 9 V14 M17 9 V14 M9 9 V14" stroke="#6aaee0" stroke-width="1.1"/><path d="M6 1 H12 M3.5 9 H7.5 M11 9 H15" stroke="#6aaee0" stroke-width="1"/></svg>
<svg class="a" style="left:853px;top:71px;" width="6" height="4" viewBox="0 0 6 4"><path d="M0 0 H6 L3.0 3.6 Z" fill="#d0d0d0"/></svg>
<svg class="a" style="left:866px;top:66px;" width="16" height="14" viewBox="0 0 16 14"><path d="M3 11 C0 11 0 7 2.5 6.5 C2 3 6 2 7.5 4 C8.5 1 13 1 13.5 4.5 C16 4.5 16 9 13.5 9.5 C13 12 9 12 8 11 C6.5 12.5 4 12.5 3 11 Z" fill="none" stroke="#e0e0e0" stroke-width="1.1"/></svg>
<svg class="a" style="left:889px;top:71px;" width="6" height="4" viewBox="0 0 6 4"><path d="M0 0 H6 L3.0 3.6 Z" fill="#d0d0d0"/></svg>
<svg class="a" style="left:829px;top:90px;" width="16" height="14" viewBox="0 0 16 14"><circle cx="11.5" cy="4.5" r="3.8" fill="none" stroke="#e0e0e0" stroke-width="1.1"/><path d="M8.5 7 L5 7 L1.5 13" fill="none" stroke="#e0e0e0" stroke-width="1.1"/><path d="M0 10 L1.5 13.5 L4 11" fill="none" stroke="#e0e0e0" stroke-width="1.1"/></svg>
<svg class="a" style="left:853px;top:95px;" width="6" height="4" viewBox="0 0 6 4"><path d="M0 0 H6 L3.0 3.6 Z" fill="#d0d0d0"/></svg>
<div class="a t " style="left:866px;top:92px;font-size:8px;color:#e0e0e0;letter-spacing:-0.3px;">-LC-</div>
<svg class="a" style="left:829px;top:113px;" width="17" height="16" viewBox="0 0 17 16"><circle cx="7.5" cy="9" r="6.5" fill="none" stroke="#e0e0e0" stroke-width="1.1"/><text x="7.5" y="11.5" text-anchor="middle" font-family="Liberation Sans" font-size="6" fill="#e0e0e0">001</text><path d="M12 0 L10 4 H13 L11 8 L16 3 H13 L15 0 Z" fill="#f4c870"/></svg>
<svg class="a" style="left:853px;top:119px;" width="6" height="4" viewBox="0 0 6 4"><path d="M0 0 H6 L3.0 3.6 Z" fill="#d0d0d0"/></svg>
<svg class="a" style="left:866px;top:113.5px;" width="17" height="14" viewBox="0 0 17 14"><rect x="0.6" y="0.6" width="15.8" height="12.8" fill="none" stroke="#e0e0e0" stroke-width="1.2"/><path d="M0.6 3.6 H16.4 M0.6 6.8 H16.4 M0.6 10 H16.4 M4.2 3.6 V13.4 M8 3.6 V13.4" stroke="#e0e0e0" stroke-width="1"/></svg>
<svg class="a" style="left:889px;top:119px;" width="6" height="4" viewBox="0 0 6 4"><path d="M0 0 H6 L3.0 3.6 Z" fill="#d0d0d0"/></svg>
<div class="a t " style="left:823px;top:140.18px;font-size:12px;color:#e4e4e4;">注释</div>
<svg class="a" style="left:853.5px;top:143.7px;" width="8" height="4" viewBox="0 0 8 4"><path d="M0 0 H8 L4.0 3.6 Z" fill="#d8d8d8"/></svg>
<svg class="a" style="left:905px;top:62px;" width="33" height="34" viewBox="0 0 33 34"><path d="M16.5 1.8 L31.5 16.5 H1.5 Z" fill="#dcdcdc"/><rect x="5.5" y="16.5" width="22" height="11.6" fill="#dcdcdc"/><path d="M5 16.8 H28 M16.5 16.8 V28 M10 10 V16.5 M23 10 V16.5" stroke="#3b4453" stroke-width="0.9"/><path d="M6 28 V32.5 M27 28 V32.5 M2 32.5 H9.5 M23.5 32.5 H31" stroke="#dcdcdc" stroke-width="1.3"/></svg>
<div class="a t " style="left:910px;top:102.48px;font-size:12px;color:#e4e4e4;">垂直</div>
<div class="a t " style="left:910px;top:119.18px;font-size:12px;color:#e4e4e4;">剖面</div>
<svg class="a" style="left:945px;top:64px;" width="18" height="17" viewBox="0 0 18 17"><path d="M1 5 L5 1 H17 V12 L13 16 H1 Z" fill="#dcdcdc"/><path d="M1 5 L5 1 H17 L13 5 Z" fill="#6aaee8"/><path d="M13 5 L17 1 V12 L13 16 Z" fill="#b8b8b8"/></svg>
<div class="a t " style="left:967px;top:68.28px;font-size:12px;color:#e4e4e4;">水平剖面</div>
<svg class="a" style="left:946px;top:88px;" width="16" height="18" viewBox="0 0 16 18"><circle cx="6.2" cy="7.6" r="4.6" fill="none" stroke="#e0e0e0" stroke-width="1.2"/><path d="M10.5 4.8 L14 7.6 L10.5 10.4" fill="none" stroke="#e0e0e0" stroke-width="1.2"/><path d="M4.8 10 L6.2 5.5 L7.6 10" fill="none" stroke="#e0e0e0" stroke-width="0.8"/><path d="M6.2 12.2 V17.5" stroke="#e0e0e0" stroke-width="1.2"/></svg>
<div class="a t " style="left:967px;top:92.08px;font-size:12px;color:#e4e4e4;">剖面线</div>
<svg class="a" style="left:945px;top:114px;" width="18" height="15" viewBox="0 0 18 15"><path d="M0.5 8.3 H17" stroke="#e0e0e0" stroke-width="1.2"/><circle cx="9.3" cy="8.3" r="4.8" fill="none" stroke="#e0e0e0" stroke-width="1.2"/><path d="M9.3 1.2 L4.6 7.6 H14 Z" fill="#3b4453" stroke="#e0e0e0" stroke-width="1.2" stroke-linejoin="round"/></svg>
<div class="a t " style="left:967px;top:115.78px;font-size:12px;color:#e4e4e4;">立面线</div>
<div class="a t " style="left:934px;top:139.58px;font-size:12px;color:#e4e4e4;">剖面和立面</div>
<svg class="a" style="left:1000.5px;top:143.3px;" width="7" height="4" viewBox="0 0 7 4"><path d="M0 0 H7 L3.5 3.6 Z" fill="#d8d8d8"/></svg>
<svg class="a" style="left:1028px;top:64px;" width="32" height="31" viewBox="0 0 32 31"><rect x="0" y="0" width="31" height="5" fill="#9a9a9a"/><rect x="0" y="5" width="15" height="25" fill="#dcdcdc"/><rect x="16" y="5" width="15" height="25" fill="#dcdcdc"/><path d="M3 10 H12 M3 14 H12 M3 18 H12 M3 22 H12" stroke="#777" stroke-width="0.9" stroke-dasharray="2 1"/><path d="M19 9 V19 H28 V14 Z" fill="#666"/></svg>
<div class="a t " style="left:1032px;top:101.98px;font-size:12px;color:#e4e4e4;">详图</div>
<div class="a t " style="left:1032px;top:118.48px;font-size:12px;color:#e4e4e4;">构件</div>
<svg class="a" style="left:4px;top:186px;" width="1558" height="629" viewBox="0 0 1558 629"><rect width="1558" height="629" fill="#212830"/><rect x="16.98" y="0" width="1" height="629" fill="#2a303a"/><rect x="35.64" y="0" width="1" height="629" fill="#2a303a"/><rect x="54.30" y="0" width="1" height="629" fill="#383e4a"/><rect x="72.96" y="0" width="1" height="629" fill="#2a303a"/><rect x="91.62" y="0" width="1" height="629" fill="#2a303a"/><rect x="110.28" y="0" width="1" height="629" fill="#2a303a"/><rect x="128.94" y="0" width="1" height="629" fill="#2a303a"/><rect x="147.60" y="0" width="1" height="629" fill="#383e4a"/><rect x="166.26" y="0" width="1" height="629" fill="#2a303a"/><rect x="184.92" y="0" width="1" height="629" fill="#2a303a"/><rect x="203.58" y="0" width="1" height="629" fill="#2a303a"/><rect x="222.24" y="0" width="1" height="629" fill="#2a303a"/><rect x="240.90" y="0" width="1" height="629" fill="#383e4a"/><rect x="259.56" y="0" width="1" height="629" fill="#2a303a"/><rect x="278.22" y="0" width="1" height="629" fill="#2a303a"/><rect x="296.88" y="0" width="1" height="629" fill="#2a303a"/><rect x="315.54" y="0" width="1" height="629" fill="#2a303a"/><rect x="334.20" y="0" width="1" height="629" fill="#383e4a"/><rect x="352.86" y="0" width="1" height="629" fill="#2a303a"/><rect x="371.52" y="0" width="1" height="629" fill="#2a303a"/><rect x="390.18" y="0" width="1" height="629" fill="#2a303a"/><rect x="408.84" y="0" width="1" height="629" fill="#2a303a"/><rect x="427.50" y="0" width="1" height="629" fill="#383e4a"/><rect x="446.16" y="0" width="1" height="629" fill="#2a303a"/><rect x="464.82" y="0" width="1" height="629" fill="#2a303a"/><rect x="483.48" y="0" width="1" height="629" fill="#2a303a"/><rect x="502.14" y="0" width="1" height="629" fill="#2a303a"/><rect x="520.80" y="0" width="1" height="629" fill="#383e4a"/><rect x="539.46" y="0" width="1" height="629" fill="#2a303a"/><rect x="558.12" y="0" width="1" height="629" fill="#2a303a"/><rect x="576.78" y="0" width="1" height="629" fill="#2a303a"/><rect x="595.44" y="0" width="1" height="629" fill="#2a303a"/><rect x="614.10" y="0" width="1" height="629" fill="#383e4a"/><rect x="632.76" y="0" width="1" height="629" fill="#2a303a"/><rect x="651.42" y="0" width="1" height="629" fill="#2a303a"/><rect x="670.08" y="0" width="1" height="629" fill="#2a303a"/><rect x="688.74" y="0" width="1" height="629" fill="#2a303a"/><rect x="707.40" y="0" width="1" height="629" fill="#383e4a"/><rect x="726.06" y="0" width="1" height="629" fill="#2a303a"/><rect x="744.72" y="0" width="1" height="629" fill="#2a303a"/><rect x="763.38" y="0" width="1" height="629" fill="#2a303a"/><rect x="782.04" y="0" width="1" height="629" fill="#2a303a"/><rect x="800.70" y="0" width="1" height="629" fill="#383e4a"/><rect x="819.36" y="0" width="1" height="629" fill="#2a303a"/><rect x="838.02" y="0" width="1" height="629" fill="#2a303a"/><rect x="856.68" y="0" width="1" height="629" fill="#2a303a"/><rect x="875.34" y="0" width="1" height="629" fill="#2a303a"/><rect x="894.00" y="0" width="1" height="629" fill="#383e4a"/><rect x="912.66" y="0" width="1" height="629" fill="#2a303a"/><rect x="931.32" y="0" width="1" height="629" fill="#2a303a"/><rect x="949.98" y="0" width="1" height="629" fill="#2a303a"/><rect x="968.64" y="0" width="1" height="629" fill="#2a303a"/><rect x="987.30" y="0" width="1" height="629" fill="#383e4a"/><rect x="1005.96" y="0" width="1" height="629" fill="#2a303a"/><rect x="1024.62" y="0" width="1" height="629" fill="#2a303a"/><rect x="1043.28" y="0" width="1" height="629" fill="#2a303a"/><rect x="1061.94" y="0" width="1" height="629" fill="#2a303a"/><rect x="1080.60" y="0" width="1" height="629" fill="#383e4a"/><rect x="1099.26" y="0" width="1" height="629" fill="#2a303a"/><rect x="1117.92" y="0" width="1" height="629" fill="#2a303a"/><rect x="1136.58" y="0" width="1" height="629" fill="#2a303a"/><rect x="1155.24" y="0" width="1" height="629" fill="#2a303a"/><rect x="1173.90" y="0" width="1" height="629" fill="#383e4a"/><rect x="1192.56" y="0" width="1" height="629" fill="#2a303a"/><rect x="1211.22" y="0" width="1" height="629" fill="#2a303a"/><rect x="1229.88" y="0" width="1" height="629" fill="#2a303a"/><rect x="1248.54" y="0" width="1" height="629" fill="#2a303a"/><rect x="1267.20" y="0" width="1" height="629" fill="#383e4a"/><rect x="1285.86" y="0" width="1" height="629" fill="#2a303a"/><rect x="1304.52" y="0" width="1" height="629" fill="#2a303a"/><rect x="1323.18" y="0" width="1" height="629" fill="#2a303a"/><rect x="1341.84" y="0" width="1" height="629" fill="#2a303a"/><rect x="1360.50" y="0" width="1" height="629" fill="#383e4a"/><rect x="1379.16" y="0" width="1" height="629" fill="#2a303a"/><rect x="1397.82" y="0" width="1" height="629" fill="#2a303a"/><rect x="1416.48" y="0" width="1" height="629" fill="#2a303a"/><rect x="1435.14" y="0" width="1" height="629" fill="#2a303a"/><rect x="1453.80" y="0" width="1" height="629" fill="#383e4a"/><rect x="1472.46" y="0" width="1" height="629" fill="#2a303a"/><rect x="1491.12" y="0" width="1" height="629" fill="#2a303a"/><rect x="1509.78" y="0" width="1" height="629" fill="#2a303a"/><rect x="1528.44" y="0" width="1" height="629" fill="#2a303a"/><rect x="1547.10" y="0" width="1" height="629" fill="#383e4a"/><rect x="0" y="8.78" width="1558" height="1" fill="#2a303a"/><rect x="0" y="27.44" width="1558" height="1" fill="#2a303a"/><rect x="0" y="46.10" width="1558" height="1" fill="#383e4a"/><rect x="0" y="64.76" width="1558" height="1" fill="#2a303a"/><rect x="0" y="83.42" width="1558" height="1" fill="#2a303a"/><rect x="0" y="102.08" width="1558" height="1" fill="#2a303a"/><rect x="0" y="120.74" width="1558" height="1" fill="#2a303a"/><rect x="0" y="139.40" width="1558" height="1" fill="#383e4a"/><rect x="0" y="158.06" width="1558" height="1" fill="#2a303a"/><rect x="0" y="176.72" width="1558" height="1" fill="#2a303a"/><rect x="0" y="195.38" width="1558" height="1" fill="#2a303a"/><rect x="0" y="214.04" width="1558" height="1" fill="#2a303a"/><rect x="0" y="232.70" width="1558" height="1" fill="#383e4a"/><rect x="0" y="251.36" width="1558" height="1" fill="#2a303a"/><rect x="0" y="270.02" width="1558" height="1" fill="#2a303a"/><rect x="0" y="288.68" width="1558" height="1" fill="#2a303a"/><rect x="0" y="307.34" width="1558" height="1" fill="#2a303a"/><rect x="0" y="326.00" width="1558" height="1" fill="#383e4a"/><rect x="0" y="344.66" width="1558" height="1" fill="#2a303a"/><rect x="0" y="363.32" width="1558" height="1" fill="#2a303a"/><rect x="0" y="381.98" width="1558" height="1" fill="#2a303a"/><rect x="0" y="400.64" width="1558" height="1" fill="#2a303a"/><rect x="0" y="419.30" width="1558" height="1" fill="#383e4a"/><rect x="0" y="437.96" width="1558" height="1" fill="#2a303a"/><rect x="0" y="456.62" width="1558" height="1" fill="#2a303a"/><rect x="0" y="475.28" width="1558" height="1" fill="#2a303a"/><rect x="0" y="493.94" width="1558" height="1" fill="#2a303a"/><rect x="0" y="512.60" width="1558" height="1" fill="#383e4a"/><rect x="0" y="531.26" width="1558" height="1" fill="#2a303a"/><rect x="0" y="549.92" width="1558" height="1" fill="#2a303a"/><rect x="0" y="568.58" width="1558" height="1" fill="#2a303a"/><rect x="0" y="587.24" width="1558" height="1" fill="#2a303a"/><rect x="0" y="605.90" width="1558" height="1" fill="#383e4a"/><rect x="0" y="624.56" width="1558" height="1" fill="#2a303a"/><rect x="54.00" y="0" width="1" height="629" fill="#3b6b3a"/></svg>
<div class="a t " style="left:7.5px;top:192px;font-size:13px;color:#e8e8e8;">[</div>
<div class="a t " style="left:11px;top:192px;font-size:13px;color:#e8e8e8;">&minus;</div>
<div class="a t " style="left:20px;top:192px;font-size:13px;color:#e8e8e8;">]</div>
<div class="a t " style="left:24.5px;top:192px;font-size:13px;color:#e8e8e8;">[</div>
<div class="a t " style="left:53px;top:192px;font-size:13px;color:#e8e8e8;">]</div>
<div class="a t " style="left:57.5px;top:192px;font-size:13px;color:#e8e8e8;">[</div>
<div class="a t " style="left:28.5px;top:193.5px;font-size:12px;color:#e8e8e8;">俯视</div>
<div class="a t " style="left:61.5px;top:193.5px;font-size:12px;color:#e8e8e8;">二维线框</div>
<div class="a t " style="left:110px;top:192px;font-size:13px;color:#e8e8e8;">]</div>
<svg class="a" style="left:330px;top:186px;" width="102" height="58" viewBox="0 0 102 58"><rect x="2" y="7" width="97" height="1.2" fill="#f0f0f0"/><rect x="50" y="0" width="1.2" height="56" fill="#f0f0f0"/><rect x="47.5" y="4.5" width="6" height="6" fill="#212830" stroke="#f0f0f0" stroke-width="1.2"/></svg>
<svg class="a" style="left:10px;top:725px;" width="60" height="85" viewBox="0 0 60 85"><path d="M10.5 23 V72" stroke="#f4f4f4" stroke-width="1.3" fill="none"/><path d="M10.5 72 H60" stroke="#f4f4f4" stroke-width="1.3" fill="none"/><rect x="6.5" y="68" width="9.5" height="9.5" fill="none" stroke="#f4f4f4" stroke-width="1.2"/><path d="M12 6 L18 12 L24 6 M18 12 V19" stroke="#f0f0f0" stroke-width="1.2" fill="none"/></svg>
<div class="a" style="left:2px;top:155px;width:1562px;height:31px;background:#232830;"></div>
<svg class="a" style="left:18px;top:162px;" width="20" height="16" viewBox="0 0 20 16"><rect x="2" y="2" width="16" height="1.8" fill="#f0f0f0"/><rect x="2" y="7.5" width="16" height="1.8" fill="#f0f0f0"/><rect x="2" y="13" width="16" height="1.8" fill="#f0f0f0"/></svg>
<svg class="a" style="left:44px;top:161px;" width="12" height="20" viewBox="0 0 12 20"><path d="M2 18 L9 2" stroke="#4e5564" stroke-width="1"/></svg>
<div class="a t " style="left:62px;top:165.28px;font-size:12px;color:#e4e4e4;">开始</div>
<svg class="a" style="left:92px;top:158px;" width="106" height="24" viewBox="0 0 106 24"><path d="M11 0 H105 L96 24 H1 Z" fill="#3b4453"/></svg>
<div class="a t " style="left:111px;top:164px;font-size:13px;color:#f4f4f4;font-weight:bold;">Drawing1</div>
<svg class="a" style="left:177px;top:165px;" width="10" height="10" viewBox="0 0 10 10"><path d="M1 1 L9 9 M9 1 L1 9" stroke="#b4b8c0" stroke-width="1.5"/></svg>
<svg class="a" style="left:206px;top:162px;" width="16" height="16" viewBox="0 0 16 16"><path d="M8 1 V15 M1 8 H15" stroke="#ececec" stroke-width="1.8"/></svg>
<svg class="a" style="left:230px;top:161px;" width="12" height="20" viewBox="0 0 12 20"><path d="M2 18 L9 2" stroke="#4e5564" stroke-width="1"/></svg>
<div class="a" style="left:4px;top:182px;width:1558px;height:4px;background:#3b4453;"></div>
<div class="a" style="left:4px;top:815px;width:1558px;height:5px;background:#3a4250;"></div>
<div class="a" style="left:4px;top:820px;width:25px;height:65px;background:#262c36;"></div>
<svg class="a" style="left:8px;top:823px;" width="18" height="7" viewBox="0 0 18 7"><rect x="0.00" y="0.0" width="1.7" height="1.9" fill="#e8e8e8"/><rect x="0.00" y="3.2" width="1.7" height="1.9" fill="#e8e8e8"/><rect x="2.55" y="0.0" width="1.7" height="1.9" fill="#e8e8e8"/><rect x="2.55" y="3.2" width="1.7" height="1.9" fill="#e8e8e8"/><rect x="5.10" y="0.0" width="1.7" height="1.9" fill="#e8e8e8"/><rect x="5.10" y="3.2" width="1.7" height="1.9" fill="#e8e8e8"/><rect x="7.65" y="0.0" width="1.7" height="1.9" fill="#e8e8e8"/><rect x="7.65" y="3.2" width="1.7" height="1.9" fill="#e8e8e8"/><rect x="10.20" y="0.0" width="1.7" height="1.9" fill="#e8e8e8"/><rect x="10.20" y="3.2" width="1.7" height="1.9" fill="#e8e8e8"/><rect x="12.75" y="0.0" width="1.7" height="1.9" fill="#e8e8e8"/><rect x="12.75" y="3.2" width="1.7" height="1.9" fill="#e8e8e8"/><rect x="15.30" y="0.0" width="1.7" height="1.9" fill="#e8e8e8"/><rect x="15.30" y="3.2" width="1.7" height="1.9" fill="#e8e8e8"/></svg>
<svg class="a" style="left:10px;top:837px;" width="11" height="11" viewBox="0 0 11 11"><path d="M1.2 1.2 L9.8 9.8 M9.8 1.2 L1.2 9.8" stroke="#e0e0e0" stroke-width="2"/></svg>
<svg class="a" style="left:7px;top:858px;" width="17" height="17" viewBox="0 0 17 17"><path d="M2 15 L10 7" stroke="#d8d8d8" stroke-width="2.6" stroke-linecap="round"/><path d="M9 8 C7 4 10 0 14 1 L12 4 L13 6 L15.5 5 C16 9 12 11 9 8 Z" fill="#d8d8d8"/></svg>
<div class="a" style="left:29px;top:820px;width:1533px;height:44px;background:#cbcbcb;"></div>
<div class="a t " style="left:32px;top:834.25px;font-size:12.5px;color:#111111;">命令:</div>
<div class="a t " style="left:32px;top:848.95px;font-size:12.5px;color:#111111;">命令:</div>
<div class="a" style="left:29px;top:864px;width:1533px;height:1px;background:#262c36;"></div>
<div class="a" style="left:29px;top:865px;width:1533px;height:20px;background:#ffffff;"></div>
<svg class="a" style="left:32px;top:868px;" width="18" height="14" viewBox="0 0 18 14"><rect x="1" y="1.5" width="15" height="11" fill="#f4f4f4" stroke="#555" stroke-width="1.1"/><rect x="1" y="1.5" width="15" height="2" fill="#555"/><path d="M3.5 6 L6 7.8 L3.5 9.6 M7 10 H10" stroke="#333" stroke-width="0.9" fill="none"/></svg>
<svg class="a" style="left:51px;top:873px;" width="8" height="4" viewBox="0 0 8 4"><path d="M0 0 H8 L4.0 3.6 Z" fill="#555"/></svg>
<div class="a t " style="left:67px;top:869.48px;font-size:12px;color:#b8b8b8;font-style:italic;"><i>键入命令</i></div>
<div class="a" style="left:4px;top:885px;width:1558px;height:5px;background:#3a4250;"></div>
<div class="a" style="left:2px;top:890px;width:1562px;height:31px;background:#232830;"></div>
<svg class="a" style="left:19px;top:895px;" width="20" height="15" viewBox="0 0 20 15"><rect x="1" y="1" width="16" height="1.8" fill="#f0f0f0"/><rect x="1" y="6.5" width="16" height="1.8" fill="#f0f0f0"/><rect x="1" y="12" width="16" height="1.8" fill="#f0f0f0"/></svg>
<svg class="a" style="left:44px;top:890px;" width="60" height="24" viewBox="0 0 60 24"><path d="M11 0 H59 L50 23.5 H1 Z" fill="#3b4453"/></svg>
<div class="a t " style="left:62px;top:895.45px;font-size:12.5px;color:#f4f4f4;font-weight:bold;">模型</div>
<div class="a t " style="left:110px;top:895.68px;font-size:12px;color:#e0e0e0;">布局</div>
<svg class="a" style="left:140px;top:890px;" width="12" height="22" viewBox="0 0 12 22"><path d="M3 20 L9 3" stroke="#4e5564" stroke-width="1"/></svg>
<svg class="a" style="left:159px;top:894px;" width="16" height="16" viewBox="0 0 16 16"><path d="M8 1 V15 M1 8 H15" stroke="#ececec" stroke-width="1.8"/></svg>
<svg class="a" style="left:182px;top:890px;" width="12" height="22" viewBox="0 0 12 22"><path d="M3 20 L9 3" stroke="#4e5564" stroke-width="1"/></svg>
<div class="a" style="left:567px;top:892px;width:150px;height:23.5px;background:#353d4a;"></div>
<div class="a t " style="left:596px;top:898px;font-size:12.5px;color:#e8e8e8;letter-spacing:-0.5px;">51767.3, 111206.0, 0.0</div>
<div class="a" style="left:720px;top:892px;width:27px;height:23.5px;background:#353d4a;"></div>
<div class="a t " style="left:723px;top:898.48px;font-size:12px;color:#e8e8e8;">模型</div>
<div class="a" style="left:751px;top:892px;width:22px;height:23.5px;background:#5d8dbf;"></div>
<svg class="a" style="left:753px;top:895px;" width="18" height="18" viewBox="0 0 18 18"><path d="M4.5 1 V16 M8.5 1 V16 M12.5 1 V16 M1 4.5 H16 M1 8.5 H16 M1 12.5 H16" stroke="#f4f4f4" stroke-width="1.3"/></svg>
<div class="a" style="left:775px;top:892px;width:22px;height:23.5px;background:#5d8dbf;"></div>
<svg class="a" style="left:778px;top:896px;" width="16" height="16" viewBox="0 0 16 16"><rect x="2.0" y="2.0" width="2.2" height="2.2" fill="#f4f4f4"/><rect x="2.0" y="7.0" width="2.2" height="2.2" fill="#f4f4f4"/><rect x="2.0" y="12.0" width="2.2" height="2.2" fill="#f4f4f4"/><rect x="7.0" y="2.0" width="2.2" height="2.2" fill="#f4f4f4"/><rect x="7.0" y="7.0" width="2.2" height="2.2" fill="#f4f4f4"/><rect x="7.0" y="12.0" width="2.2" height="2.2" fill="#f4f4f4"/><rect x="12.0" y="2.0" width="2.2" height="2.2" fill="#f4f4f4"/><rect x="12.0" y="7.0" width="2.2" height="2.2" fill="#f4f4f4"/><rect x="12.0" y="12.0" width="2.2" height="2.2" fill="#f4f4f4"/></svg>
<div class="a" style="left:797.5px;top:892px;width:16.5px;height:23.5px;background:#353d4a;"></div>
<svg class="a" style="left:802px;top:902px;" width="8" height="4" viewBox="0 0 8 4"><path d="M0 0 H8 L4.0 3.6 Z" fill="#d8d8d8"/></svg>
<div class="a" style="left:818px;top:892px;width:22px;height:23.5px;background:#5d8dbf;"></div>
<svg class="a" style="left:819px;top:895px;" width="20" height="18" viewBox="0 0 20 18"><path d="M5.5 3 V10 M2 6.5 H9" stroke="#f4f4f4" stroke-width="1.3"/><rect x="8" y="11" width="10" height="4" fill="#f4f4f4"/></svg>
<div class="a" style="left:842px;top:892px;width:23px;height:23.5px;background:#353d4a;"></div>
<svg class="a" style="left:844px;top:894px;" width="20" height="20" viewBox="0 0 20 20"><path d="M2.5 2 V17.5 H18 M2.5 12 H7.5 V17.5" stroke="#e8e8e8" stroke-width="1.1" fill="none"/></svg>
<div class="a" style="left:867px;top:892px;width:22px;height:23.5px;background:#5d8dbf;"></div>
<svg class="a" style="left:869px;top:894px;" width="19" height="20" viewBox="0 0 19 20"><circle cx="8" cy="11" r="6.3" fill="none" stroke="#f4f4f4" stroke-width="1.2"/><path d="M8 11 L17 4 M8 11 H18" stroke="#f4f4f4" stroke-width="1.2"/></svg>
<div class="a" style="left:889.5px;top:892px;width:16.5px;height:23.5px;background:#353d4a;"></div>
<svg class="a" style="left:894px;top:902px;" width="8" height="4" viewBox="0 0 8 4"><path d="M0 0 H8 L4.0 3.6 Z" fill="#d8d8d8"/></svg>
<div class="a" style="left:908px;top:892px;width:22px;height:23.5px;background:#5d8dbf;"></div>
<svg class="a" style="left:910px;top:894px;" width="19" height="20" viewBox="0 0 19 20"><path d="M2 16 L15 4 M2 16 H17" stroke="#f4f4f4" stroke-width="1.2"/><rect x="7" y="9.5" width="3" height="3" fill="#f4f4f4"/></svg>
<div class="a" style="left:932px;top:892px;width:22px;height:23.5px;background:#5d8dbf;"></div>
<svg class="a" style="left:934px;top:894px;" width="19" height="20" viewBox="0 0 19 20"><rect x="2.5" y="5" width="14" height="12" fill="none" stroke="#f4f4f4" stroke-width="1.2"/><rect x="0.5" y="2" width="5" height="5" fill="#5a88bb" stroke="#f4f4f4" stroke-width="1.1"/></svg>
<div class="a" style="left:955px;top:892px;width:16px;height:23.5px;background:#353d4a;"></div>
<svg class="a" style="left:959px;top:902px;" width="8" height="4" viewBox="0 0 8 4"><path d="M0 0 H8 L4.0 3.6 Z" fill="#d8d8d8"/></svg>
<div class="a" style="left:973px;top:892px;width:22px;height:23.5px;background:#353d4a;"></div>
<svg class="a" style="left:975px;top:895px;" width="18" height="18" viewBox="0 0 18 18"><rect x="1" y="2.5" width="16" height="1.3" fill="#e8e8e8"/><rect x="1" y="2" width="8" height="2" fill="#e8e8e8"/><rect x="1" y="7" width="16" height="1.3" fill="#e8e8e8"/><rect x="1" y="6.3" width="8" height="3" fill="#e8e8e8"/><rect x="1" y="11.8" width="16" height="1.3" fill="#e8e8e8"/><rect x="1" y="11" width="8" height="4.2" fill="#e8e8e8"/></svg>
<div class="a" style="left:997px;top:892px;width:24px;height:23.5px;background:#353d4a;"></div>
<svg class="a" style="left:999px;top:894px;" width="20" height="20" viewBox="0 0 20 20"><path d="M4 1.5 V7.5 M1 4.5 H7" stroke="#f0f0f0" stroke-width="1.2"/><path d="M6.5 16 V6.5 H16" fill="none" stroke="#e0e0e0" stroke-width="0.9"/><rect x="8" y="8" width="10" height="10" fill="#7ccf8c"/></svg>
<div class="a" style="left:1024px;top:892px;width:119px;height:23.5px;background:#353d4a;"></div>
<svg class="a" style="left:1028px;top:896px;" width="18" height="17" viewBox="0 0 18 17"><path d="M7 0 L9.3 7 L14 16 L7 12.5 L0 16 L4.7 7 Z" fill="#dcdcdc"/><circle cx="13" cy="4" r="2.6" fill="none" stroke="#dcdcdc" stroke-width="1.1"/></svg>
<div class="a" style="left:1049px;top:892px;width:22px;height:23.5px;background:#5d8dbf;"></div>
<svg class="a" style="left:1052px;top:896px;" width="18" height="17" viewBox="0 0 18 17"><path d="M7 0 L9.3 7 L14 16 L7 12.5 L0 16 L4.7 7 Z" fill="#f4faff"/><path d="M13 0 L10.5 4.5 H13 L11 8.5 L15.5 3.5 H13 L14.8 0 Z" fill="#f4faff"/></svg>
<svg class="a" style="left:1077px;top:896px;" width="18" height="17" viewBox="0 0 18 17"><path d="M7 0 L9.3 7 L14 16 L7 12.5 L0 16 L4.7 7 Z" fill="#dcdcdc"/></svg>
<div class="a t " style="left:1101px;top:898px;font-size:12.5px;color:#e8e8e8;letter-spacing:-0.9px;">1:100</div>
<svg class="a" style="left:1132px;top:902px;" width="8" height="4" viewBox="0 0 8 4"><path d="M0 0 H8 L4.0 3.6 Z" fill="#d8d8d8"/></svg>
<div class="a" style="left:1147px;top:892px;width:39px;height:23.5px;background:#353d4a;"></div>
<svg class="a" style="left:1150px;top:896px;" width="16" height="16" viewBox="0 0 16 16"><path d="M15.42 6.34 L15.42 9.66 L13.35 9.65 L12.95 10.61 L14.42 12.07 L12.07 14.42 L10.61 12.95 L9.65 13.35 L9.66 15.42 L6.34 15.42 L6.35 13.35 L5.39 12.95 L3.93 14.42 L1.58 12.07 L3.05 10.61 L2.65 9.65 L0.58 9.66 L0.58 6.34 L2.65 6.35 L3.05 5.39 L1.58 3.93 L3.93 1.58 L5.39 3.05 L6.35 2.65 L6.34 0.58 L9.66 0.58 L9.65 2.65 L10.61 3.05 L12.07 1.58 L14.42 3.93 L12.95 5.39 L13.35 6.35 Z M10.6 8 A2.6 2.6 0 1 0 5.4 8 A2.6 2.6 0 1 0 10.6 8 Z" fill="#dcdcdc" fill-rule="evenodd"/></svg>
<svg class="a" style="left:1174px;top:902px;" width="8" height="4" viewBox="0 0 8 4"><path d="M0 0 H8 L4.0 3.6 Z" fill="#d8d8d8"/></svg>
<div class="a" style="left:1188px;top:892px;width:24px;height:23.5px;background:#353d4a;"></div>
<svg class="a" style="left:1191px;top:895px;" width="18" height="18" viewBox="0 0 18 18"><path d="M9 1 V17 M1 9 H17" stroke="#ececec" stroke-width="2"/></svg>
<div class="a" style="left:1215px;top:892px;width:66px;height:23.5px;background:#353d4a;"></div>
<div class="a t " style="left:1216px;top:898px;font-size:12px;color:#e8e8e8;letter-spacing:-0.2px;">MEP 设计</div>
<svg class="a" style="left:1271px;top:902px;" width="8" height="4" viewBox="0 0 8 4"><path d="M0 0 H8 L4.0 3.6 Z" fill="#d8d8d8"/></svg>
<div class="a" style="left:1283px;top:892px;width:62px;height:23.5px;background:#353d4a;"></div>
<svg class="a" style="left:1287px;top:895px;" width="18" height="18" viewBox="0 0 18 18"><ellipse cx="9" cy="5" rx="6" ry="3" fill="none" stroke="#d8d8d8" stroke-dasharray="1.5 1.5"/><path d="M1 9 L9 5 L17 9 L9 13 Z" fill="#7cc4f4"/><path d="M1 12 L9 16 L17 12 M1 10 V12 M17 10 V12" fill="none" stroke="#e8e8e8" stroke-width="1.5"/></svg>
<div class="a t " style="left:1313px;top:898px;font-size:12.5px;color:#e8e8e8;letter-spacing:-0.3px;">1400</div>
<div class="a" style="left:1348px;top:892px;width:45px;height:23.5px;background:#353d4a;"></div>
<svg class="a" style="left:1351px;top:895px;" width="18" height="18" viewBox="0 0 18 18"><path d="M6 5 L12 2 L17 5 V12 L11 16 L6 13 Z M6 5 L11 8 L17 5 M11 8 V16" fill="none" stroke="#e0e0e0" stroke-width="1.1"/><rect x="1" y="11" width="4.5" height="4.5" fill="none" stroke="#f0a070" stroke-width="1"/><text x="1" y="6" font-size="6" fill="#e0e0e0" font-family="Liberation Sans">Z</text></svg>
<div class="a t " style="left:1376px;top:898px;font-size:12.5px;color:#e8e8e8;">+0</div>
<div class="a" style="left:1396px;top:892px;width:24px;height:23.5px;background:#353d4a;"></div>
<svg class="a" style="left:1397px;top:894px;" width="22" height="20" viewBox="0 0 22 20"><rect x="3" y="2" width="6" height="6" fill="none" stroke="#e8e8e8" stroke-width="1.1"/><circle cx="15.5" cy="7.5" r="3.2" fill="none" stroke="#e8e8e8" stroke-width="1.1"/><path d="M9.5 11 L13 17.5 H6 Z" fill="none" stroke="#e8e8e8" stroke-width="1.1"/></svg>
<div class="a" style="left:1423px;top:892px;width:83px;height:23.5px;background:#353d4a;"></div>
<svg class="a" style="left:1428px;top:895px;" width="20" height="19" viewBox="0 0 20 19"><path d="M1 3 C1 1 3 0 5 0 H12 V9 H1 Z" fill="#d4d4d4"/><rect x="1" y="9" width="6" height="8" fill="#bcbcbc"/><rect x="4" y="3" width="6" height="2" fill="#888"/><rect x="7" y="8" width="12" height="10" fill="#eeeeee"/><path d="M9 15 L12 12 L14 14 L17 11" stroke="#e04040" stroke-width="1" fill="none"/></svg>
<div class="a" style="left:1454px;top:892px;width:22px;height:23.5px;background:#5d8dbf;"></div>
<svg class="a" style="left:1455px;top:895px;" width="20" height="19" viewBox="0 0 20 19"><path d="M2 5 L5 2 H17 V14 L14 17 H2 Z" fill="none" stroke="#f4f4f4" stroke-width="1.1"/><path d="M2 5 H14 V17 M14 5 L17 2" stroke="#f4f4f4" stroke-width="1.1" fill="none"/><path d="M3 14 L11 6 M3 10 L7 6 M7 16 L13 10" stroke="#e8f0ff" stroke-width="1"/></svg>
<svg class="a" style="left:1483px;top:895px;" width="18" height="18" viewBox="0 0 18 18"><path d="M4 6 L8 2 H17 L13 6 Z M1 14 L5 10 H14 L10 14 Z" fill="#e0e0e0"/><path d="M9 6 V12 M7 10 L9 12.5 L11 10" stroke="#333" stroke-width="1.2" fill="none"/></svg>
<div class="a" style="left:1510px;top:892px;width:24px;height:23.5px;background:#353d4a;"></div>
<svg class="a" style="left:1512px;top:895px;" width="20" height="18" viewBox="0 0 20 18"><rect x="1.5" y="2.5" width="16" height="12" fill="none" stroke="#e8e8e8" stroke-width="1.1"/><path d="M4 12 L8 8 M4 12 H7 M4 12 V9 M15 5 L11 9 M15 5 H12 M15 5 V8" stroke="#e8e8e8" stroke-width="1.1" fill="none"/></svg>
<div class="a" style="left:1536px;top:892px;width:24px;height:23.5px;background:#353d4a;"></div>
<svg class="a" style="left:1538px;top:896px;" width="20" height="16" viewBox="0 0 20 16"><rect x="1" y="1" width="17" height="2" fill="#f0f0f0"/><rect x="1" y="7" width="17" height="2" fill="#f0f0f0"/><rect x="1" y="13" width="17" height="2" fill="#f0f0f0"/></svg>
<svg class="a" style="left:66px;top:199px;" width="241" height="323" viewBox="0 0 241 323"><path d="M4 0 H239 V322 H4 Q0 322 0 318 V4 Q0 0 4 0 Z" fill="none"/></svg>
<div class="a" style="left:66px;top:199px;width:219.5px;height:322px;background:#2b313c;border-radius:3px;"></div>
<div class="a" style="left:90px;top:202px;width:195px;height:317px;background:#3b4453;border-radius:0 0 4px 4px;"></div>
<div class="a" style="left:284px;top:202px;width:22px;height:47px;background:#3b4453;border-radius:0 4px 0 0;"></div>
<div class="a" style="left:284.5px;top:249.5px;width:21.5px;height:46.7px;background:#2f3643;border-radius:0 3px 3px 0;"></div>
<div class="a" style="left:284.5px;top:297.5px;width:21.5px;height:46.7px;background:#2f3643;border-radius:0 3px 3px 0;"></div>
<div class="a" style="left:284.5px;top:346.5px;width:21.5px;height:45.2px;background:#2f3643;border-radius:0 3px 3px 0;"></div>
<div class="a" style="left:284.5px;top:394px;width:21.5px;height:45.7px;background:#2f3643;border-radius:0 3px 3px 0;"></div>
<div class="a" style="left:284.5px;top:442.3px;width:21.5px;height:46.39999999999999px;background:#2f3643;border-radius:0 3px 3px 0;"></div>
<div class="a t" style="left:290px;top:237.5px;font-size:12px;color:#e8e8e8;transform:rotate(-90deg);transform-origin:0 0;">风管</div>
<div class="a t" style="left:290px;top:284px;font-size:12px;color:#d0d0d0;transform:rotate(-90deg);transform-origin:0 0;">管件</div>
<div class="a t" style="left:290px;top:333px;font-size:12px;color:#d0d0d0;transform:rotate(-90deg);transform-origin:0 0;">设备</div>
<div class="a t" style="left:290px;top:381px;font-size:12px;color:#d0d0d0;transform:rotate(-90deg);transform-origin:0 0;">注释</div>
<div class="a t" style="left:290px;top:436.5px;font-size:12px;color:#d0d0d0;transform:rotate(-90deg);transform-origin:0 0;">标记...</div>
<div class="a t" style="left:290px;top:475.5px;font-size:12px;color:#d0d0d0;transform:rotate(-90deg);transform-origin:0 0;">分析</div>
<div class="a" style="left:284.5px;top:490.5px;width:21.5px;height:4px;background:#2f3643;"></div>
<div class="a" style="left:284.5px;top:495.5px;width:21.5px;height:4px;background:#2f3643;"></div>
<div class="a" style="left:284.5px;top:500.5px;width:21.5px;height:3px;background:#2f3643;"></div>
<svg class="a" style="left:71px;top:202px;" width="14" height="52" viewBox="0 0 14 52"><path d="M2.5 2.5 L10.5 10.5 M10.5 2.5 L2.5 10.5" stroke="#d8d8d8" stroke-width="2.2"/><rect x="2" y="20" width="1.8" height="10" fill="#d4d4d4"/><rect x="2" y="21.5" width="3" height="7" fill="#d4d4d4"/><path d="M10.5 22 L6.5 25 L10.5 28 Z" fill="#d4d4d4"/><circle cx="6.2" cy="44" r="2.6" fill="none" stroke="#d8d8d8" stroke-width="1.7"/><g stroke="#d8d8d8" stroke-width="2"><path d="M6.2 38.8 V40.6 M6.2 47.4 V49.2 M1 44 H2.8 M9.6 44 H11.4"/></g><g stroke="#d8d8d8" stroke-width="2.3" stroke-linecap="square"><path d="M2.3 40.1 L3.6 41.4 M8.8 46.6 L10.1 47.9 M2.3 47.9 L3.6 46.6 M8.8 41.4 L10.1 40.1"/></g></svg>
<div class="a t" style="left:71px;top:494px;font-size:12px;color:#d0d4dc;transform:rotate(-90deg);transform-origin:0 0;">工具选项板 - HVAC</div>
<svg class="a" style="left:72px;top:503px;" width="14" height="17" viewBox="0 0 14 17"><path d="M1 1 H13 V6 L11 8 V16 H1 Z" fill="#f0f0f0"/><g fill="#555"><rect x="3" y="4" width="2.5" height="2.5"/><rect x="7" y="4" width="2.5" height="2.5"/><rect x="3" y="8" width="2.5" height="2.5"/><rect x="7" y="8" width="2.5" height="2.5"/><rect x="3" y="12" width="2.5" height="2.5"/><rect x="7" y="12" width="2.5" height="2.5"/></g></svg>
<div class="a" style="left:95px;top:207px;width:5px;height:123px;background:#2a303a;border-radius:3px;"></div>
<svg class="a" style="left:110px;top:209px;" width="24" height="24" viewBox="0 0 24 24"><defs><linearGradient id="dg" x1="0" y1="0" x2="1" y2="0"><stop offset="0" stop-color="#7a82b4"/><stop offset="1" stop-color="#b4b8d4"/></linearGradient></defs><path d="M0.65 1.14 H23.78 V6.28 H5.28 L0.65 2.17 Z" fill="#6a72a8"/><path d="M0.65 2.17 L5.28 6.28 V23.23 L0.65 18.1 Z" fill="#565e92"/><path d="M16.58 6.28 H23.78 V23.23 L16.58 16.04 Z" fill="url(#dg)"/><path d="M5.28 16.04 H16.58 L23.78 23.23 H5.28 Z" fill="#6c74ac"/><path d="M0.65 18.1 L5.28 23.23 H23.78" fill="none" stroke="#2e3460" stroke-width="0.9"/><path d="M0.65 2.17 V18.1 M0.65 1.14 H23.78 V23.23" fill="none" stroke="#3a4070" stroke-width="0.7"/></svg>
<div class="a t " style="left:137px;top:214.28px;font-size:12px;color:#ececec;">风管</div>
<svg class="a" style="left:109px;top:244px;" width="26" height="16" viewBox="0 0 26 16"><path d="M1 11 L5 8 L9 4 L13 6 L16 9 L19 12 L22 10 L25 8" fill="none" stroke="#2e3346" stroke-width="4.5" stroke-linejoin="round"/><path d="M1 11 L5 8 L9 4 L13 6 L16 9 L19 12 L22 10 L25 8" fill="none" stroke="#555a72" stroke-width="1.6" stroke-dasharray="1.5 1" stroke-linejoin="round"/></svg>
<div class="a t " style="left:137px;top:245.78px;font-size:12px;color:#ececec;">软风管</div>
<svg class="a" style="left:110px;top:271px;" width="24" height="24" viewBox="0 0 24 24"><defs><linearGradient id="dg" x1="0" y1="0" x2="1" y2="0"><stop offset="0" stop-color="#7a82b4"/><stop offset="1" stop-color="#b4b8d4"/></linearGradient></defs><path d="M0.65 1.14 H23.78 V6.28 H5.28 L0.65 2.17 Z" fill="#6a72a8"/><path d="M0.65 2.17 L5.28 6.28 V23.23 L0.65 18.1 Z" fill="#565e92"/><path d="M16.58 6.28 H23.78 V23.23 L16.58 16.04 Z" fill="url(#dg)"/><path d="M5.28 16.04 H16.58 L23.78 23.23 H5.28 Z" fill="#6c74ac"/><path d="M0.65 18.1 L5.28 23.23 H23.78" fill="none" stroke="#2e3460" stroke-width="0.9"/><path d="M0.65 2.17 V18.1 M0.65 1.14 H23.78 V23.23" fill="none" stroke="#3a4070" stroke-width="0.7"/></svg>
<svg class="a" style="left:121px;top:278px;" width="13" height="15" viewBox="0 0 13 15"><rect x="0" y="0" width="13" height="15" fill="#cfcfcf"/><circle cx="8" cy="4.5" r="2.5" fill="#3a3a3a"/><path d="M3 6 H6 M8 8 V11" stroke="#555" stroke-width="1"/><rect x="2.5" y="8.5" width="5" height="4.5" fill="none" stroke="#555" stroke-width="1.1"/></svg>
<div class="a t " style="left:137px;top:276.88px;font-size:12px;color:#ececec;">风管系统配置</div>
<div class="a" style="left:104px;top:308px;width:175px;height:1px;background:#2a303a;"></div>
<div class="a t " style="left:106px;top:329.18px;font-size:12px;color:#d0d4dc;">按系统</div>
<svg class="a" style="left:110px;top:357px;" width="24" height="24" viewBox="0 0 24 24"><defs><linearGradient id="dg" x1="0" y1="0" x2="1" y2="0"><stop offset="0" stop-color="#7a82b4"/><stop offset="1" stop-color="#b4b8d4"/></linearGradient></defs><path d="M0.65 1.14 H23.78 V6.28 H5.28 L0.65 2.17 Z" fill="#6a72a8"/><path d="M0.65 2.17 L5.28 6.28 V23.23 L0.65 18.1 Z" fill="#565e92"/><path d="M16.58 6.28 H23.78 V23.23 L16.58 16.04 Z" fill="url(#dg)"/><path d="M5.28 16.04 H16.58 L23.78 23.23 H5.28 Z" fill="#6c74ac"/><path d="M0.65 18.1 L5.28 23.23 H23.78" fill="none" stroke="#2e3460" stroke-width="0.9"/><path d="M0.65 2.17 V18.1 M0.65 1.14 H23.78 V23.23" fill="none" stroke="#3a4070" stroke-width="0.7"/></svg>
<div class="a t " style="left:137px;top:362.68px;font-size:12px;color:#ececec;">新风</div>
<svg class="a" style="left:110px;top:388px;" width="24" height="24" viewBox="0 0 24 24"><defs><linearGradient id="dg" x1="0" y1="0" x2="1" y2="0"><stop offset="0" stop-color="#7a82b4"/><stop offset="1" stop-color="#b4b8d4"/></linearGradient></defs><path d="M0.65 1.14 H23.78 V6.28 H5.28 L0.65 2.17 Z" fill="#6a72a8"/><path d="M0.65 2.17 L5.28 6.28 V23.23 L0.65 18.1 Z" fill="#565e92"/><path d="M16.58 6.28 H23.78 V23.23 L16.58 16.04 Z" fill="url(#dg)"/><path d="M5.28 16.04 H16.58 L23.78 23.23 H5.28 Z" fill="#6c74ac"/><path d="M0.65 18.1 L5.28 23.23 H23.78" fill="none" stroke="#2e3460" stroke-width="0.9"/><path d="M0.65 2.17 V18.1 M0.65 1.14 H23.78 V23.23" fill="none" stroke="#3a4070" stroke-width="0.7"/></svg>
<div class="a t " style="left:137px;top:393.68px;font-size:12px;color:#ececec;">送风 - 拆除</div>
<svg class="a" style="left:110px;top:419px;" width="24" height="24" viewBox="0 0 24 24"><defs><linearGradient id="dg" x1="0" y1="0" x2="1" y2="0"><stop offset="0" stop-color="#7a82b4"/><stop offset="1" stop-color="#b4b8d4"/></linearGradient></defs><path d="M0.65 1.14 H23.78 V6.28 H5.28 L0.65 2.17 Z" fill="#6a72a8"/><path d="M0.65 2.17 L5.28 6.28 V23.23 L0.65 18.1 Z" fill="#565e92"/><path d="M16.58 6.28 H23.78 V23.23 L16.58 16.04 Z" fill="url(#dg)"/><path d="M5.28 16.04 H16.58 L23.78 23.23 H5.28 Z" fill="#6c74ac"/><path d="M0.65 18.1 L5.28 23.23 H23.78" fill="none" stroke="#2e3460" stroke-width="0.9"/><path d="M0.65 2.17 V18.1 M0.65 1.14 H23.78 V23.23" fill="none" stroke="#3a4070" stroke-width="0.7"/></svg>
<div class="a t " style="left:137px;top:424.68px;font-size:12px;color:#ececec;">送风 - 低压</div>
<svg class="a" style="left:110px;top:450px;" width="24" height="24" viewBox="0 0 24 24"><defs><linearGradient id="dg" x1="0" y1="0" x2="1" y2="0"><stop offset="0" stop-color="#7a82b4"/><stop offset="1" stop-color="#b4b8d4"/></linearGradient></defs><path d="M0.65 1.14 H23.78 V6.28 H5.28 L0.65 2.17 Z" fill="#6a72a8"/><path d="M0.65 2.17 L5.28 6.28 V23.23 L0.65 18.1 Z" fill="#565e92"/><path d="M16.58 6.28 H23.78 V23.23 L16.58 16.04 Z" fill="url(#dg)"/><path d="M5.28 16.04 H16.58 L23.78 23.23 H5.28 Z" fill="#6c74ac"/><path d="M0.65 18.1 L5.28 23.23 H23.78" fill="none" stroke="#2e3460" stroke-width="0.9"/><path d="M0.65 2.17 V18.1 M0.65 1.14 H23.78 V23.23" fill="none" stroke="#3a4070" stroke-width="0.7"/></svg>
<div class="a t " style="left:137px;top:455.68px;font-size:12px;color:#ececec;">送风 - 中压</div>
<svg class="a" style="left:110px;top:481px;" width="24" height="24" viewBox="0 0 24 24"><defs><linearGradient id="dg" x1="0" y1="0" x2="1" y2="0"><stop offset="0" stop-color="#7a82b4"/><stop offset="1" stop-color="#b4b8d4"/></linearGradient></defs><path d="M0.65 1.14 H23.78 V6.28 H5.28 L0.65 2.17 Z" fill="#6a72a8"/><path d="M0.65 2.17 L5.28 6.28 V23.23 L0.65 18.1 Z" fill="#565e92"/><path d="M16.58 6.28 H23.78 V23.23 L16.58 16.04 Z" fill="url(#dg)"/><path d="M5.28 16.04 H16.58 L23.78 23.23 H5.28 Z" fill="#6c74ac"/><path d="M0.65 18.1 L5.28 23.23 H23.78" fill="none" stroke="#2e3460" stroke-width="0.9"/><path d="M0.65 2.17 V18.1 M0.65 1.14 H23.78 V23.23" fill="none" stroke="#3a4070" stroke-width="0.7"/></svg>
<div class="a t " style="left:137px;top:486.68px;font-size:12px;color:#ececec;">回风</div>
<svg class="a" style="left:110px;top:511px;" width="24" height="6" viewBox="0 0 24 6"><path d="M0.6 1.5 L2 0.5 H10 V2 H0.6 Z" fill="#7a82b0"/></svg>
<div class="a" style="left:67.5px;top:524.5px;width:220px;height:346.5px;background:#2b313c;border-radius:4px;"></div>
<div class="a" style="left:91.5px;top:527px;width:195px;height:341px;background:#3b4453;border-radius:4px 0 4px 4px;"></div>
<div class="a" style="left:286px;top:527px;width:21.5px;height:107px;background:#3b4453;border-radius:0 4px 0 0;"></div>
<div class="a" style="left:286.5px;top:634.5px;width:21px;height:106.5px;background:#2f3643;border-radius:0 3px 3px 0;"></div>
<div class="a" style="left:286.5px;top:742px;width:21px;height:107.5px;background:#2f3643;border-radius:0 3px 3px 0;"></div>
<div class="a t" style="left:292px;top:591px;font-size:12px;color:#e8e8e8;transform:rotate(-90deg);transform-origin:0 0;">设计</div>
<div class="a t" style="left:292px;top:698.5px;font-size:12px;color:#d0d0d0;transform:rotate(-90deg);transform-origin:0 0;">显示</div>
<div class="a t" style="left:292px;top:821px;font-size:12px;color:#d0d0d0;transform:rotate(-90deg);transform-origin:0 0;">扩展数据</div>
<svg class="a" style="left:73px;top:527.5px;" width="14" height="52" viewBox="0 0 14 52"><path d="M2.5 2.5 L10.5 10.5 M10.5 2.5 L2.5 10.5" stroke="#d8d8d8" stroke-width="2.2"/><rect x="2" y="20" width="1.8" height="10" fill="#d4d4d4"/><rect x="2" y="21.5" width="3" height="7" fill="#d4d4d4"/><path d="M10.5 22 L6.5 25 L10.5 28 Z" fill="#d4d4d4"/><circle cx="6.2" cy="44" r="2.6" fill="none" stroke="#d8d8d8" stroke-width="1.7"/><g stroke="#d8d8d8" stroke-width="2"><path d="M6.2 38.8 V40.6 M6.2 47.4 V49.2 M1 44 H2.8 M9.6 44 H11.4"/></g><g stroke="#d8d8d8" stroke-width="2.3" stroke-linecap="square"><path d="M2.3 40.1 L3.6 41.4 M8.8 46.6 L10.1 47.9 M2.3 47.9 L3.6 46.6 M8.8 41.4 L10.1 40.1"/></g></svg>
<div class="a t" style="left:73px;top:844px;font-size:12px;color:#d0d4dc;transform:rotate(-90deg);transform-origin:0 0;">特性</div>
<svg class="a" style="left:73px;top:853px;" width="13" height="17" viewBox="0 0 13 17"><rect x="0.5" y="0.5" width="12" height="16" fill="#e8e8e8"/><rect x="2" y="2" width="9" height="6" fill="#7cc4f4"/><path d="M2 11 H11 M5 9.5 V12.5 M2 14 H11 M8 12.5 V15.5" stroke="#555" stroke-width="1"/></svg>
<div class="a" style="left:111.5px;top:539.5px;width:89px;height:22.5px;background:#4a5366;border:1px solid #2c323d;box-sizing:border-box;border-radius:2px;"></div>
<div class="a t " style="left:115px;top:545.28px;font-size:12px;color:#e8e8e8;">无选择</div>
<svg class="a" style="left:189.5px;top:549px;" width="8" height="4" viewBox="0 0 8 4"><path d="M0 0 H8 L4.0 3.6 Z" fill="#d8d8d8"/></svg>
<svg class="a" style="left:208px;top:542px;" width="18" height="18" viewBox="0 0 18 18"><rect x="0.8" y="2.5" width="8" height="8.5" fill="#8ecaf4" stroke="#1e3e60" stroke-width="0.8"/><rect x="5.5" y="7" width="9" height="9.5" fill="#8ecaf4" stroke="#1e3e60" stroke-width="0.8"/><path d="M12 0.5 V8.5 M8 4.5 H16" stroke="#6ad08a" stroke-width="2.2"/></svg>
<svg class="a" style="left:232px;top:542px;" width="18" height="18" viewBox="0 0 18 18"><rect x="1" y="1.5" width="13" height="11" fill="none" stroke="#8ad8a0" stroke-width="1.1" stroke-dasharray="1.8 1.2"/><rect x="3" y="3.5" width="7" height="7" fill="#7ccf8c"/><path d="M10 6 V17 L12.3 14.8 L14.5 18.5 L16 17.8 L14 14 H17 Z" fill="#f0f0f0"/></svg>
<svg class="a" style="left:256px;top:542px;" width="18" height="18" viewBox="0 0 18 18"><path d="M1 3 V14 L3.5 11.5 L6 16 L7.5 15 L5 10.5 H8.5 Z" fill="#f4f4f4"/><rect x="8" y="8" width="9" height="9" fill="#f4f4f4"/><path d="M10 10 H16 M10 12.5 H16 M10 15 H16" stroke="#7cc4f4" stroke-width="1"/><path d="M11 0 L9 4 H12 L10 7 L14 3 H11 L13 0 Z" fill="#f4c870"/></svg>
<div class="a" style="left:97.5px;top:566.5px;width:4.5px;height:147.5px;background:#2a303a;border-radius:3px;"></div>
<div class="a" style="left:111px;top:566.4px;width:161.5px;height:21.100000000000023px;background:#2c323d;"></div>
<div class="a t " style="left:118.5px;top:571.43px;font-size:12px;color:#f4f4f4;font-weight:bold;">常规</div>
<svg class="a" style="left:256px;top:574.95px;" width="8" height="4" viewBox="0 0 8 4"><path d="M0 0 H8 L4.0 3.6 Z" fill="#d8d8d8"/></svg>
<div class="a" style="left:128.5px;top:587.5px;width:144px;height:20.899999999999977px;background:#2c323d;"></div>
<div class="a" style="left:129.5px;top:588.5px;width:60.5px;height:19.899999999999977px;background:#3b4453;"></div>
<div class="a" style="left:191px;top:588.5px;width:80.5px;height:19.899999999999977px;background:#3b4453;"></div>
<div class="a t " style="left:135px;top:590.93px;font-size:12px;color:#c4c8d0;">颜色</div>
<div class="a" style="left:194px;top:591.25px;width:13.6px;height:13.6px;background:#ffffff;"></div>
<div class="a t " style="left:214px;top:591.5px;font-size:13px;color:#ececec;">ByLayer</div>
<div class="a" style="left:128.5px;top:608.4px;width:144px;height:20.899999999999977px;background:#2c323d;"></div>
<div class="a" style="left:129.5px;top:609.4px;width:60.5px;height:19.899999999999977px;background:#3b4453;"></div>
<div class="a" style="left:191px;top:609.4px;width:80.5px;height:19.899999999999977px;background:#3b4453;"></div>
<div class="a t " style="left:135px;top:611.83px;font-size:12px;color:#c4c8d0;">图层</div>
<div class="a t " style="left:194px;top:612.3px;font-size:13px;color:#ececec;">0</div>
<div class="a" style="left:128.5px;top:629.3px;width:144px;height:20.899999999999977px;background:#2c323d;"></div>
<div class="a" style="left:129.5px;top:630.3px;width:60.5px;height:19.899999999999977px;background:#3b4453;"></div>
<div class="a" style="left:191px;top:630.3px;width:80.5px;height:19.899999999999977px;background:#3b4453;"></div>
<div class="a t " style="left:135px;top:632.73px;font-size:12px;color:#c4c8d0;">线型</div>
<div class="a" style="left:194px;top:639.75px;width:36px;height:1px;background:#e8e8e8;"></div>
<div class="a t " style="left:234.5px;top:633.2px;font-size:13px;color:#ececec;">ByL...</div>
<div class="a" style="left:128.5px;top:650.1999999999999px;width:144px;height:20.899999999999977px;background:#2c323d;"></div>
<div class="a" style="left:129.5px;top:651.1999999999999px;width:60.5px;height:19.899999999999977px;background:#3b4453;"></div>
<div class="a" style="left:191px;top:651.1999999999999px;width:80.5px;height:19.899999999999977px;background:#3b4453;"></div>
<div class="a t " style="left:135px;top:653.63px;font-size:12px;color:#c4c8d0;">线型比例</div>
<div class="a t " style="left:194px;top:654.1px;font-size:13px;color:#ececec;">1</div>
<div class="a" style="left:128.5px;top:671.0999999999999px;width:144px;height:20.899999999999977px;background:#2c323d;"></div>
<div class="a" style="left:129.5px;top:672.0999999999999px;width:60.5px;height:19.899999999999977px;background:#3b4453;"></div>
<div class="a" style="left:191px;top:672.0999999999999px;width:80.5px;height:19.899999999999977px;background:#3b4453;"></div>
<div class="a t " style="left:135px;top:674.53px;font-size:12px;color:#c4c8d0;">线宽</div>
<div class="a" style="left:194px;top:681.55px;width:36px;height:1px;background:#e8e8e8;"></div>
<div class="a t " style="left:234.5px;top:675.0px;font-size:13px;color:#ececec;">ByL...</div>
<div class="a" style="left:128.5px;top:691.9999999999999px;width:144px;height:20.899999999999977px;background:#2c323d;"></div>
<div class="a" style="left:129.5px;top:692.9999999999999px;width:60.5px;height:19.899999999999977px;background:#3b4453;"></div>
<div class="a" style="left:191px;top:692.9999999999999px;width:80.5px;height:19.899999999999977px;background:#3b4453;"></div>
<div class="a t " style="left:135px;top:695.43px;font-size:12px;color:#c4c8d0;">透明度</div>
<div class="a t " style="left:194px;top:695.9px;font-size:13px;color:#ececec;">ByLayer</div>
<div class="a" style="left:128.5px;top:712.8999999999999px;width:144px;height:20.899999999999977px;background:#2c323d;"></div>
<div class="a" style="left:129.5px;top:713.8999999999999px;width:60.5px;height:19.899999999999977px;background:#3b4453;"></div>
<div class="a" style="left:191px;top:713.8999999999999px;width:80.5px;height:19.899999999999977px;background:#3b4453;"></div>
<div class="a t " style="left:135px;top:716.33px;font-size:12px;color:#c4c8d0;">厚度</div>
<div class="a t " style="left:194px;top:716.8px;font-size:13px;color:#ececec;">0</div>
<div class="a" style="left:129px;top:733.7999999999998px;width:143.5px;height:1px;background:#2c323d;"></div>
<div class="a" style="left:111px;top:738.4px;width:161.5px;height:21.200000000000045px;background:#2c323d;"></div>
<div class="a t " style="left:118.5px;top:743.48px;font-size:12px;color:#f4f4f4;font-weight:bold;">三维效果</div>
<svg class="a" style="left:256px;top:747.0px;" width="8" height="4" viewBox="0 0 8 4"><path d="M0 0 H8 L4.0 3.6 Z" fill="#d8d8d8"/></svg>
<div class="a" style="left:128.5px;top:759.6px;width:144px;height:21.0px;background:#2c323d;"></div>
<div class="a" style="left:129.5px;top:760.6px;width:60.5px;height:20.0px;background:#3b4453;"></div>
<div class="a" style="left:191px;top:760.6px;width:80.5px;height:20.0px;background:#3b4453;"></div>
<div class="a t " style="left:135px;top:763.08px;font-size:12px;color:#c4c8d0;">材质</div>
<div class="a t " style="left:194px;top:763.6px;font-size:13px;color:#ececec;">ByLayer</div>
<div class="a" style="left:129px;top:780.6px;width:143.5px;height:1px;background:#2c323d;"></div>
<div class="a" style="left:111px;top:784.3px;width:161.5px;height:21.0px;background:#2c323d;"></div>
<div class="a t " style="left:118.5px;top:789.28px;font-size:12px;color:#f4f4f4;font-weight:bold;">打印样式</div>
<svg class="a" style="left:256px;top:792.8px;" width="8" height="4" viewBox="0 0 8 4"><path d="M0 0 H8 L4.0 3.6 Z" fill="#d8d8d8"/></svg>
<div class="a" style="left:128.5px;top:805.3px;width:144px;height:21.0px;background:#2c323d;"></div>
<div class="a" style="left:129.5px;top:806.3px;width:60.5px;height:20.0px;background:#3b4453;"></div>
<div class="a" style="left:191px;top:806.3px;width:80.5px;height:20.0px;background:#3b4453;"></div>
<div class="a t " style="left:135px;top:808.78px;font-size:12px;color:#c4c8d0;">打印样式</div>
<div class="a t " style="left:194px;top:809.3px;font-size:13px;color:#8a909a;">ByColor</div>
<div class="a" style="left:128.5px;top:826.3px;width:144px;height:21.0px;background:#2c323d;"></div>
<div class="a" style="left:129.5px;top:827.3px;width:60.5px;height:20.0px;background:#3b4453;"></div>
<div class="a" style="left:191px;top:827.3px;width:80.5px;height:20.0px;background:#3b4453;"></div>
<div class="a t " style="left:135px;top:829.78px;font-size:12px;color:#c4c8d0;">打印样...</div>
<div class="a t " style="left:194px;top:830.3px;font-size:13px;color:#ececec;">AIA Standa...</div>
<div class="a" style="left:128.5px;top:847.3px;width:144px;height:20.700000000000045px;background:#2c323d;"></div>
<div class="a" style="left:129.5px;top:848.3px;width:60.5px;height:19.700000000000045px;background:#3b4453;"></div>
<div class="a" style="left:191px;top:848.3px;width:80.5px;height:19.700000000000045px;background:#3b4453;"></div>
<div class="a t " style="left:135px;top:850.63px;font-size:12px;color:#c4c8d0;">打印表...</div>
<div class="a t " style="left:194px;top:851.1px;font-size:13px;color:#8a909a;">模型</div>
<svg class="a" style="left:1430px;top:225px;" width="116" height="116" viewBox="0 0 116 116"><circle cx="58" cy="58" r="47.2" fill="none" stroke="rgba(120,126,138,0.42)" stroke-width="11.5"/></svg>
<div class="a" style="left:1465px;top:260px;width:46px;height:45.5px;background:#b2b4ba;"></div>
<div class="a" style="left:1474px;top:268.5px;width:27.5px;height:28.6px;background:#b4bac4;"></div>
<div class="a t " style="left:1477.5px;top:271px;font-size:21px;color:#5c616b;font-family:"Liberation Serif",serif;">上</div>
<div class="a t " style="left:1480px;top:227.84px;font-size:16px;color:#c8cbd0;">北</div>
<div class="a t " style="left:1480px;top:327.44px;font-size:16px;color:#c8cbd0;">南</div>
<div class="a t " style="left:1432px;top:275.44px;font-size:16px;color:#c8cbd0;">西</div>
<div class="a t " style="left:1528.5px;top:275.44px;font-size:16px;color:#c8cbd0;">东</div>
<div class="a" style="left:1465px;top:359.5px;width:47px;height:17px;background:#8a909c;border-radius:4px;"></div>
<div class="a t " style="left:1468px;top:363px;font-size:11px;color:#a8adb6;">WCS</div>
<svg class="a" style="left:1496px;top:365px;" width="9" height="6" viewBox="0 0 9 6"><path d="M0.5 0.5 H8.5 L4.5 5 Z" fill="none" stroke="#a8adb6" stroke-width="0.8"/></svg>
<svg class="a" style="left:1500px;top:194px;" width="52" height="14" viewBox="0 0 52 14"><rect x="1" y="8" width="10" height="3.2" fill="#e8e8e8"/><rect x="22" y="4.8" width="7.4" height="7.4" fill="none" stroke="#f0f0f0" stroke-width="2.2"/><path d="M24.5 2.2 H31.8 V9.6" fill="none" stroke="#e8e8e8" stroke-width="1.6"/><path d="M41.5 3 L48.5 10 M48.5 3 L41.5 10" stroke="#f4f4f4" stroke-width="2.8"/></svg>
<div class="a" style="left:1012.5px;top:122px;width:420.5px;height:700.5px;background:#262c36;border-radius:4px;"></div>
<div class="a" style="left:1013.5px;top:123px;width:23px;height:698px;background:#2b313c;border-radius:3px 0 0 3px;"></div>
<div class="a" style="left:1036.5px;top:125.5px;width:394.5px;height:694.5px;background:#3b4453;border-radius:3px;"></div>
<svg class="a" style="left:1019px;top:127px;" width="14" height="52" viewBox="0 0 14 52"><path d="M2.5 2.5 L10.5 10.5 M10.5 2.5 L2.5 10.5" stroke="#d8d8d8" stroke-width="2.2"/><rect x="2" y="20" width="1.8" height="10" fill="#d4d4d4"/><rect x="2" y="21.5" width="3" height="7" fill="#d4d4d4"/><path d="M10.5 22 L6.5 25 L10.5 28 Z" fill="#d4d4d4"/><circle cx="6.2" cy="44" r="2.6" fill="none" stroke="#d8d8d8" stroke-width="1.7"/><g stroke="#d8d8d8" stroke-width="2"><path d="M6.2 38.8 V40.6 M6.2 47.4 V49.2 M1 44 H2.8 M9.6 44 H11.4"/></g><g stroke="#d8d8d8" stroke-width="2.3" stroke-linecap="square"><path d="M2.3 40.1 L3.6 41.4 M8.8 46.6 L10.1 47.9 M2.3 47.9 L3.6 46.6 M8.8 41.4 L10.1 40.1"/></g></svg>
<div class="a t" style="left:1018px;top:795.5px;font-size:12px;color:#c8ccd4;transform:rotate(-90deg);transform-origin:0 0;">样式浏览器</div>
<svg class="a" style="left:1016px;top:804px;" width="18" height="18" viewBox="0 0 18 18"><path d="M9 8 L15 1 L17 3 L11 10 Z" fill="#f0f0f0"/><path d="M1 15 C3 9 6 8 9 8 L11 10 C11 14 7 16 1 15 Z" fill="#e0b070"/><rect x="7" y="11" width="10" height="6" fill="#f0c878"/></svg>
<div class="a t " style="left:1131.7px;top:135.48px;font-size:12px;color:#eceef2;">对象类型</div>
<div class="a t " style="left:1131.7px;top:164.28px;font-size:12px;color:#eceef2;">图形源</div>
<div class="a t " style="left:1131.7px;top:193.28px;font-size:12px;color:#eceef2;">图形文件</div>
<div class="a" style="left:1185.4px;top:133.9px;width:209.1px;height:22.099999999999994px;background:#4d576b;border:1px solid #2c323d;box-sizing:border-box;"></div>
<div class="a t " style="left:1191px;top:139.43px;font-size:12px;color:#eceef2;">风管</div>
<svg class="a" style="left:1382px;top:143.45px;" width="8" height="4" viewBox="0 0 8 4"><path d="M0 0 H8 L4.0 3.6 Z" fill="#e0e0e0"/></svg>
<div class="a" style="left:1185.4px;top:162.8px;width:209.1px;height:22.19999999999999px;background:#4d576b;border:1px solid #2c323d;box-sizing:border-box;"></div>
<div class="a t " style="left:1191px;top:168.38px;font-size:12px;color:#eceef2;">内容构件库图形</div>
<svg class="a" style="left:1382px;top:172.4px;" width="8" height="4" viewBox="0 0 8 4"><path d="M0 0 H8 L4.0 3.6 Z" fill="#e0e0e0"/></svg>
<div class="a" style="left:1185.4px;top:191.7px;width:209.1px;height:22.30000000000001px;background:#4d576b;border:1px solid #2c323d;box-sizing:border-box;"></div>
<div class="a t " style="left:1191px;top:197.33px;font-size:12px;color:#eceef2;">所有图形</div>
<svg class="a" style="left:1382px;top:201.35px;" width="8" height="4" viewBox="0 0 8 4"><path d="M0 0 H8 L4.0 3.6 Z" fill="#e0e0e0"/></svg>
<div class="a" style="left:1185.4px;top:220.5px;width:209.1px;height:23px;background:#4d576b;border:1px solid #2c323d;box-sizing:border-box;"></div>
<div class="a t " style="left:1191px;top:226.48px;font-size:12px;color:#b0b4bc;font-style:italic;"><i>搜索样式</i></div>
<svg class="a" style="left:1376px;top:224px;" width="16" height="16" viewBox="0 0 16 16"><circle cx="6.5" cy="6.5" r="5" fill="none" stroke="#9aa0aa" stroke-width="1.2"/><path d="M10 10 L14.5 14.5" stroke="#9aa0aa" stroke-width="1.3"/></svg>
<svg class="a" style="left:1399px;top:137.5px;" width="16" height="16" viewBox="0 0 16 16"><circle cx="8" cy="8" r="7.5" fill="#d8d8d8"/><text x="8" y="12.5" text-anchor="middle" font-family="Liberation Sans" font-weight="bold" font-size="12" fill="#505660">?</text></svg>
<svg class="a" style="left:1229px;top:250px;" width="9" height="6" viewBox="0 0 9 6"><path d="M0 5 L4.5 0 L9 5 Z" fill="#e4e4e4"/></svg>
<div class="a" style="left:1049px;top:262px;width:370px;height:556px;background:#222831;"></div>
<svg class="a" style="left:1053px;top:266px;" width="60" height="20" viewBox="0 0 60 20"><path d="M1 6.5 H7.5 V2 L15.5 9 L7.5 16 V11.5 H1 Z" fill="#3e6488"/><path d="M27 2.5 V17 M20 10 H34" stroke="#3e7a52" stroke-width="4"/><path d="M43 10 L48 14 L54 10 L50 6 Z" fill="#7a6a50"/><path d="M50 6 L55 2 L58 5 L54 10 Z" fill="#666a72"/><path d="M43 10 L49 15 L46 17 L41 13 Z" fill="#8a7a5a"/></svg>
<svg class="a" style="left:1309px;top:266px;" width="106" height="20" viewBox="0 0 106 20"><g fill="#4a505c"><rect x="0.5" y="1.5" width="4" height="4"/><rect x="0.5" y="7.5" width="4" height="4"/><rect x="0.5" y="13.5" width="4" height="4"/><rect x="6.5" y="2.5" width="8" height="1.5"/><rect x="6.5" y="8.5" width="8" height="1.5"/><rect x="6.5" y="14.5" width="8" height="1.5"/></g><path d="M22 7 H29 L25.5 11 Z" fill="#4a505c"/><path d="M37 5 L41 1 H53 V13 L49 17 H37 Z M37 5 H49 V17 M49 5 L53 1" fill="none" stroke="#4e5460" stroke-width="1.1"/><path d="M37 5 L41 1 H53 L49 5 Z" fill="#3e5a78"/><path d="M59 7 H66 L62.5 11 Z" fill="#4a505c"/><circle cx="82" cy="9" r="7.8" fill="#3e4a5a"/><path d="M82 9 L82 1.2 A7.8 7.8 0 0 1 89.8 9 Z" fill="#6a4a50"/><path d="M82 9 L89.8 9 A7.8 7.8 0 0 1 82 16.8 Z" fill="#3e5a4a"/><path d="M82 9 L82 16.8 A7.8 7.8 0 0 1 74.2 9 Z" fill="#484a70"/><path d="M95 7 H102 L98.5 11 Z" fill="#4a505c"/></svg>
<div class="a t " style="left:1052px;top:290.98px;font-size:12px;color:#f0f0f0;">名称</div>
<div class="a t " style="left:1133px;top:290.98px;font-size:12px;color:#f0f0f0;">说明</div>
<div class="a t " style="left:1304px;top:290.98px;font-size:12px;color:#f0f0f0;">文件</div>
<div class="a" style="left:1129px;top:288px;width:1px;height:16px;background:#2c323d;"></div>
<div class="a" style="left:1301px;top:288px;width:1px;height:16px;background:#2c323d;"></div>
<div class="a" style="left:1049px;top:304.5px;width:356px;height:499px;overflow:hidden;">
<div class="a" style="left:1px;top:0.00px;width:79.5px;height:17.25px;background:#3b4453;"></div>
<div class="a" style="left:81px;top:0.00px;width:171px;height:17.25px;background:#3b4453;"></div>
<div class="a" style="left:253px;top:0.00px;width:102.5px;height:17.25px;background:#3b4453;"></div>
<div class="a t" style="left:3px;top:2.60px;font-size:13px;color:#eceef2;">Standard</div>
<div class="a t" style="left:83px;top:3.20px;font-size:12px;color:#eceef2;">默认的风管系统</div>
<div class="a" style="left:1px;top:18.25px;width:79.5px;height:17.25px;background:#3b4453;"></div>
<div class="a" style="left:81px;top:18.25px;width:171px;height:17.25px;background:#3b4453;"></div>
<div class="a" style="left:253px;top:18.25px;width:102.5px;height:17.25px;background:#3b4453;"></div>
<div class="a t" style="left:3px;top:21.45px;font-size:12px;color:#eceef2;">再循环空气</div>
<div class="a t" style="left:83px;top:21.45px;font-size:12px;color:#eceef2;">绘制再循环风管的系统。</div>
<div class="a" style="left:1px;top:36.50px;width:79.5px;height:17.25px;background:#3b4453;"></div>
<div class="a" style="left:81px;top:36.50px;width:171px;height:17.25px;background:#3b4453;"></div>
<div class="a" style="left:253px;top:36.50px;width:102.5px;height:17.25px;background:#3b4453;"></div>
<div class="a t" style="left:3px;top:39.70px;font-size:12px;color:#eceef2;">卫生间供水</div>
<div class="a t" style="left:83px;top:39.70px;font-size:12px;color:#eceef2;">绘制卫生间送风管的系统。</div>
<div class="a" style="left:1px;top:54.75px;width:79.5px;height:17.25px;background:#3b4453;"></div>
<div class="a" style="left:81px;top:54.75px;width:171px;height:17.25px;background:#3b4453;"></div>
<div class="a" style="left:253px;top:54.75px;width:102.5px;height:17.25px;background:#3b4453;"></div>
<div class="a t" style="left:3px;top:57.95px;font-size:12px;color:#eceef2;">卫生间排风</div>
<div class="a t" style="left:83px;top:57.95px;font-size:12px;color:#eceef2;">绘制卫生间排风管道的系统。</div>
<div class="a" style="left:1px;top:73.00px;width:79.5px;height:17.25px;background:#3b4453;"></div>
<div class="a" style="left:81px;top:73.00px;width:171px;height:17.25px;background:#3b4453;"></div>
<div class="a" style="left:253px;top:73.00px;width:102.5px;height:17.25px;background:#3b4453;"></div>
<div class="a t" style="left:3px;top:76.20px;font-size:12px;color:#eceef2;">厨房排风</div>
<div class="a t" style="left:83px;top:76.20px;font-size:12px;color:#eceef2;">绘制厨房排风管的系统。</div>
<div class="a" style="left:1px;top:91.25px;width:79.5px;height:17.25px;background:#3b4453;"></div>
<div class="a" style="left:81px;top:91.25px;width:171px;height:17.25px;background:#3b4453;"></div>
<div class="a" style="left:253px;top:91.25px;width:102.5px;height:17.25px;background:#3b4453;"></div>
<div class="a t" style="left:3px;top:94.45px;font-size:12px;color:#eceef2;">厨房用品</div>
<div class="a t" style="left:83px;top:94.45px;font-size:12px;color:#eceef2;">绘制厨房送风管的系统。</div>
<div class="a" style="left:1px;top:109.50px;width:79.5px;height:17.25px;background:#3b4453;"></div>
<div class="a" style="left:81px;top:109.50px;width:171px;height:17.25px;background:#3b4453;"></div>
<div class="a" style="left:253px;top:109.50px;width:102.5px;height:17.25px;background:#3b4453;"></div>
<div class="a t" style="left:3px;top:112.70px;font-size:12px;color:#eceef2;">回风</div>
<div class="a t" style="left:83px;top:112.70px;font-size:12px;color:#eceef2;">绘制回风管的系统。</div>
<div class="a" style="left:1px;top:127.75px;width:79.5px;height:17.25px;background:#3b4453;"></div>
<div class="a" style="left:81px;top:127.75px;width:171px;height:17.25px;background:#3b4453;"></div>
<div class="a" style="left:253px;top:127.75px;width:102.5px;height:17.25px;background:#3b4453;"></div>
<div class="a t" style="left:3px;top:130.95px;font-size:12px;color:#eceef2;">回风 - 拆除</div>
<div class="a t" style="left:83px;top:130.95px;font-size:12px;color:#eceef2;">绘制已拆除回风管的系统。</div>
<div class="a" style="left:1px;top:146.00px;width:79.5px;height:17.25px;background:#3b4453;"></div>
<div class="a" style="left:81px;top:146.00px;width:171px;height:17.25px;background:#3b4453;"></div>
<div class="a" style="left:253px;top:146.00px;width:102.5px;height:17.25px;background:#3b4453;"></div>
<div class="a t" style="left:3px;top:149.20px;font-size:12px;color:#eceef2;">回风 - 现有</div>
<div class="a t" style="left:83px;top:149.20px;font-size:12px;color:#eceef2;">绘制现有回风管的系统。</div>
<div class="a" style="left:1px;top:164.25px;width:79.5px;height:17.25px;background:#3b4453;"></div>
<div class="a" style="left:81px;top:164.25px;width:171px;height:17.25px;background:#3b4453;"></div>
<div class="a" style="left:253px;top:164.25px;width:102.5px;height:17.25px;background:#3b4453;"></div>
<div class="a t" style="left:3px;top:167.45px;font-size:12px;color:#eceef2;">排烟</div>
<div class="a t" style="left:83px;top:167.45px;font-size:12px;color:#eceef2;">绘制烟雾排出风管的系统。</div>
<div class="a" style="left:1px;top:182.50px;width:79.5px;height:17.25px;background:#3b4453;"></div>
<div class="a" style="left:81px;top:182.50px;width:171px;height:17.25px;background:#3b4453;"></div>
<div class="a" style="left:253px;top:182.50px;width:102.5px;height:17.25px;background:#3b4453;"></div>
<div class="a t" style="left:3px;top:185.70px;font-size:12px;color:#eceef2;">排风</div>
<div class="a t" style="left:83px;top:185.70px;font-size:12px;color:#eceef2;">绘制排风管的系统。</div>
<div class="a" style="left:1px;top:200.75px;width:79.5px;height:17.25px;background:#3b4453;"></div>
<div class="a" style="left:81px;top:200.75px;width:171px;height:17.25px;background:#3b4453;"></div>
<div class="a" style="left:253px;top:200.75px;width:102.5px;height:17.25px;background:#3b4453;"></div>
<div class="a t" style="left:3px;top:203.95px;font-size:12px;color:#eceef2;">排风 - 拆除</div>
<div class="a t" style="left:83px;top:203.95px;font-size:12px;color:#eceef2;">绘制已拆除的排风管道的系统。</div>
<div class="a" style="left:1px;top:219.00px;width:79.5px;height:17.25px;background:#3b4453;"></div>
<div class="a" style="left:81px;top:219.00px;width:171px;height:17.25px;background:#3b4453;"></div>
<div class="a" style="left:253px;top:219.00px;width:102.5px;height:17.25px;background:#3b4453;"></div>
<div class="a t" style="left:3px;top:222.20px;font-size:12px;color:#eceef2;">排风 - 现有</div>
<div class="a t" style="left:83px;top:222.20px;font-size:12px;color:#eceef2;">绘制现有排风风管的系统。</div>
<div class="a" style="left:1px;top:237.25px;width:79.5px;height:17.25px;background:#3b4453;"></div>
<div class="a" style="left:81px;top:237.25px;width:171px;height:17.25px;background:#3b4453;"></div>
<div class="a" style="left:253px;top:237.25px;width:102.5px;height:17.25px;background:#3b4453;"></div>
<div class="a t" style="left:3px;top:240.45px;font-size:12px;color:#eceef2;">新风</div>
<div class="a t" style="left:83px;top:240.45px;font-size:12px;color:#eceef2;">绘制新风管的系统。</div>
<div class="a" style="left:1px;top:255.50px;width:79.5px;height:17.25px;background:#3b4453;"></div>
<div class="a" style="left:81px;top:255.50px;width:171px;height:17.25px;background:#3b4453;"></div>
<div class="a" style="left:253px;top:255.50px;width:102.5px;height:17.25px;background:#3b4453;"></div>
<div class="a t" style="left:3px;top:258.70px;font-size:12px;color:#eceef2;">新风 - 拆除</div>
<div class="a t" style="left:83px;top:258.70px;font-size:12px;color:#eceef2;">绘制已拆除新风管的系统。</div>
<div class="a" style="left:1px;top:273.75px;width:79.5px;height:17.25px;background:#3b4453;"></div>
<div class="a" style="left:81px;top:273.75px;width:171px;height:17.25px;background:#3b4453;"></div>
<div class="a" style="left:253px;top:273.75px;width:102.5px;height:17.25px;background:#3b4453;"></div>
<div class="a t" style="left:3px;top:276.95px;font-size:12px;color:#eceef2;">新风 - 现有</div>
<div class="a t" style="left:83px;top:276.95px;font-size:12px;color:#eceef2;">绘制现有新风管的系统。</div>
<div class="a" style="left:1px;top:292.00px;width:79.5px;height:17.25px;background:#3b4453;"></div>
<div class="a" style="left:81px;top:292.00px;width:171px;height:17.25px;background:#3b4453;"></div>
<div class="a" style="left:253px;top:292.00px;width:102.5px;height:17.25px;background:#3b4453;"></div>
<div class="a t" style="left:3px;top:295.20px;font-size:12px;color:#eceef2;">新风 - 补风</div>
<div class="a t" style="left:83px;top:295.20px;font-size:12px;color:#eceef2;">绘制室外新风管的系统。</div>
<div class="a" style="left:1px;top:310.25px;width:79.5px;height:17.25px;background:#3b4453;"></div>
<div class="a" style="left:81px;top:310.25px;width:171px;height:17.25px;background:#3b4453;"></div>
<div class="a" style="left:253px;top:310.25px;width:102.5px;height:17.25px;background:#3b4453;"></div>
<div class="a t" style="left:3px;top:313.45px;font-size:12px;color:#eceef2;">洁净室排风</div>
<div class="a t" style="left:83px;top:313.45px;font-size:12px;color:#eceef2;">绘制清理房间排风风管的系统。</div>
<div class="a" style="left:1px;top:328.50px;width:79.5px;height:17.25px;background:#3b4453;"></div>
<div class="a" style="left:81px;top:328.50px;width:171px;height:17.25px;background:#3b4453;"></div>
<div class="a" style="left:253px;top:328.50px;width:102.5px;height:17.25px;background:#3b4453;"></div>
<div class="a t" style="left:3px;top:331.70px;font-size:12px;color:#eceef2;">洁净室送风</div>
<div class="a t" style="left:83px;top:331.70px;font-size:12px;color:#eceef2;">绘制清理房间送风管的系统。</div>
<div class="a" style="left:1px;top:346.75px;width:79.5px;height:17.25px;background:#3b4453;"></div>
<div class="a" style="left:81px;top:346.75px;width:171px;height:17.25px;background:#3b4453;"></div>
<div class="a" style="left:253px;top:346.75px;width:102.5px;height:17.25px;background:#3b4453;"></div>
<div class="a t" style="left:3px;top:349.95px;font-size:12px;color:#eceef2;">补风</div>
<div class="a t" style="left:83px;top:349.95px;font-size:12px;color:#eceef2;">绘制补给风管的系统。</div>
<div class="a" style="left:1px;top:365.00px;width:79.5px;height:17.25px;background:#3b4453;"></div>
<div class="a" style="left:81px;top:365.00px;width:171px;height:17.25px;background:#3b4453;"></div>
<div class="a" style="left:253px;top:365.00px;width:102.5px;height:17.25px;background:#3b4453;"></div>
<div class="a t" style="left:3px;top:368.20px;font-size:12px;color:#eceef2;">补风 - 拆除</div>
<div class="a t" style="left:83px;top:368.20px;font-size:12px;color:#eceef2;">绘制已拆除补风风管的系统。</div>
<div class="a" style="left:1px;top:383.25px;width:79.5px;height:17.25px;background:#3b4453;"></div>
<div class="a" style="left:81px;top:383.25px;width:171px;height:17.25px;background:#3b4453;"></div>
<div class="a" style="left:253px;top:383.25px;width:102.5px;height:17.25px;background:#3b4453;"></div>
<div class="a t" style="left:3px;top:386.45px;font-size:12px;color:#eceef2;">补风 - 现有</div>
<div class="a t" style="left:83px;top:386.45px;font-size:12px;color:#eceef2;">绘制现有补风风管的系统。</div>
<div class="a" style="left:1px;top:401.50px;width:79.5px;height:17.25px;background:#3b4453;"></div>
<div class="a" style="left:81px;top:401.50px;width:171px;height:17.25px;background:#3b4453;"></div>
<div class="a" style="left:253px;top:401.50px;width:102.5px;height:17.25px;background:#3b4453;"></div>
<div class="a t" style="left:3px;top:404.70px;font-size:12px;color:#eceef2;">送风</div>
<div class="a t" style="left:83px;top:404.70px;font-size:12px;color:#eceef2;">绘制送风管的系统。</div>
<div class="a" style="left:1px;top:419.75px;width:79.5px;height:17.25px;background:#3b4453;"></div>
<div class="a" style="left:81px;top:419.75px;width:171px;height:17.25px;background:#3b4453;"></div>
<div class="a" style="left:253px;top:419.75px;width:102.5px;height:17.25px;background:#3b4453;"></div>
<div class="a t" style="left:3px;top:422.95px;font-size:12px;color:#eceef2;">送风 - 中压</div>
<div class="a t" style="left:83px;top:422.95px;font-size:12px;color:#eceef2;">绘制中压送风管的系统。</div>
<div class="a" style="left:1px;top:438.00px;width:79.5px;height:17.25px;background:#3b4453;"></div>
<div class="a" style="left:81px;top:438.00px;width:171px;height:17.25px;background:#3b4453;"></div>
<div class="a" style="left:253px;top:438.00px;width:102.5px;height:17.25px;background:#3b4453;"></div>
<div class="a t" style="left:3px;top:441.20px;font-size:12px;color:#eceef2;">送风 - 低压</div>
<div class="a t" style="left:83px;top:441.20px;font-size:12px;color:#eceef2;">绘制低压送风管的系统。</div>
<div class="a" style="left:1px;top:456.25px;width:79.5px;height:17.25px;background:#3b4453;"></div>
<div class="a" style="left:81px;top:456.25px;width:171px;height:17.25px;background:#3b4453;"></div>
<div class="a" style="left:253px;top:456.25px;width:102.5px;height:17.25px;background:#3b4453;"></div>
<div class="a t" style="left:3px;top:459.45px;font-size:12px;color:#eceef2;">送风 - 拆除</div>
<div class="a t" style="left:83px;top:459.45px;font-size:12px;color:#eceef2;">绘制已拆除送风管的系统。</div>
<div class="a" style="left:1px;top:474.50px;width:79.5px;height:17.25px;background:#3b4453;"></div>
<div class="a" style="left:81px;top:474.50px;width:171px;height:17.25px;background:#3b4453;"></div>
<div class="a" style="left:253px;top:474.50px;width:102.5px;height:17.25px;background:#3b4453;"></div>
<div class="a t" style="left:3px;top:477.70px;font-size:12px;color:#eceef2;">送风 - 现有</div>
<div class="a t" style="left:83px;top:477.70px;font-size:12px;color:#eceef2;">绘制现有送风管的系统。</div>
<div class="a" style="left:1px;top:492.75px;width:79.5px;height:17.25px;background:#3b4453;"></div>
<div class="a" style="left:81px;top:492.75px;width:171px;height:17.25px;background:#3b4453;"></div>
<div class="a" style="left:253px;top:492.75px;width:102.5px;height:17.25px;background:#3b4453;"></div>
<div class="a t" style="left:3px;top:495.95px;font-size:12px;color:#eceef2;">送风 - 高压</div>
<div class="a t" style="left:83px;top:495.95px;font-size:12px;color:#eceef2;">绘制高压送风管的系统。</div>
</div>
<div class="a" style="left:1404.5px;top:288.5px;width:12.5px;height:515px;background:#7a8290;"></div>
<svg class="a" style="left:1405px;top:290px;" width="12" height="14" viewBox="0 0 12 14"><path d="M1.5 12 L6 3 L10.5 12 Z" fill="#5a606c"/></svg>
<div class="a" style="left:1406px;top:307px;width:9.5px;height:229.5px;background:#474e5c;border-radius:5px;"></div>
<svg class="a" style="left:1405px;top:785px;" width="12" height="14" viewBox="0 0 12 14"><path d="M1.5 2 L6 11 L10.5 2 Z" fill="#5a606c"/></svg>
<div class="a" style="left:1049.5px;top:803.7px;width:355px;height:12.5px;background:#7a8290;"></div>
<svg class="a" style="left:1050px;top:804px;" width="15" height="12" viewBox="0 0 15 12"><path d="M2 6 L13 1.5 V10.5 Z" fill="#5a606c"/></svg>
<div class="a" style="left:1069.5px;top:805px;width:252px;height:10px;background:#474e5c;border-radius:5px;"></div>
<svg class="a" style="left:1388px;top:804px;" width="15" height="12" viewBox="0 0 15 12"><path d="M13 6 L2 1.5 V10.5 Z" fill="#5a606c"/></svg></body></html>
